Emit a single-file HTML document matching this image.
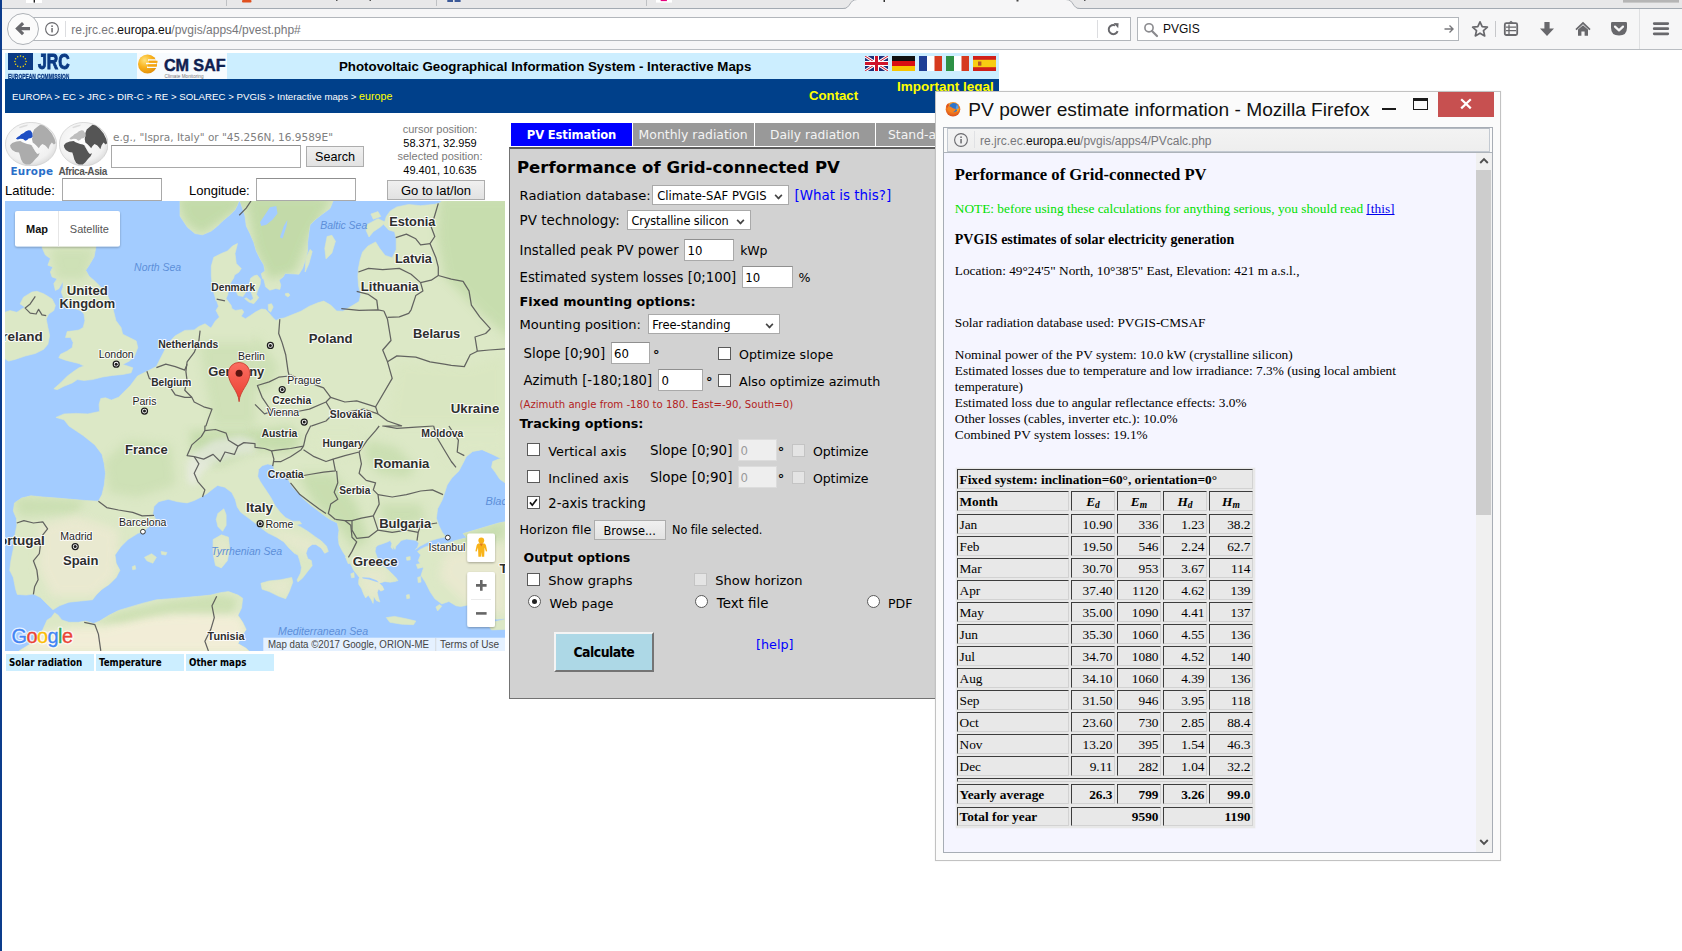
<!DOCTYPE html>
<html lang="en">
<head>
<meta charset="utf-8">
<title>PV potential estimation utility</title>
<style>
html,body{margin:0;padding:0;}
body{width:1682px;height:951px;position:relative;overflow:hidden;background:#fff;font-family:"DejaVu Sans","Liberation Sans",sans-serif;font-size:13px;color:#000;}
.a{position:absolute;white-space:nowrap;}
.ui{font-family:"Liberation Sans",sans-serif;}
.vd{font-family:"DejaVu Sans","Liberation Sans",sans-serif;}
.tm{font-family:"Liberation Serif",serif;}
.inp{position:absolute;box-sizing:border-box;background:#fff;border:1px solid #a9a9a9;border-top-color:#8f8f8f;font-family:"DejaVu Sans",sans-serif;font-size:12px;line-height:20px;padding-left:3px;}
.btn{position:absolute;box-sizing:border-box;background:linear-gradient(#f0f0f0,#e2e2e2);border:1px solid #adadad;text-align:center;font-family:"Liberation Sans",sans-serif;}
.cb{position:absolute;box-sizing:border-box;width:13px;height:13px;background:#fff;border:1px solid #5a5a5a;}
.cb.dis{background:#e4e4e4;border-color:#c4c4c4;}
.rd{position:absolute;box-sizing:border-box;width:13px;height:13px;border-radius:50%;background:#fff;border:1px solid #5a5a5a;}
.sel{position:absolute;box-sizing:border-box;background:#fff;border:1px solid #a9a9a9;font-family:"DejaVu Sans",sans-serif;font-size:12px;line-height:18px;padding-left:4px;height:20px;}
.sel:after{content:"";position:absolute;right:6px;top:6px;width:5px;height:5px;border-right:2px solid #444;border-bottom:2px solid #444;transform:rotate(45deg) scale(.8);transform-origin:center;}
.lbl{position:absolute;white-space:nowrap;font-size:13px;line-height:16px;}
</style>
</head>
<body>

<!-- ================= BROWSER CHROME ================= -->
<div id="chrome" class="a ui" style="left:0;top:0;width:1682px;height:50px;background:#f6f6f7;">
  <!-- tab strip remnants -->
  <div class="a" style="left:0;top:0;width:1682px;height:8px;background:#e8e8e9;"></div>
  <div class="a" style="left:0;top:7.6px;width:1682px;height:1px;background:#a3aab2;"></div>
  <svg class="a" style="left:0;top:0" width="1682" height="9" viewBox="0 0 1682 9">
    <path d="M843 9 C851 9 849 0 857 0 L1066 0 C1074 0 1072 9 1080 9 Z" fill="#f6f6f7"/>
    <path d="M843 8.5 C851 8.5 849 -0.5 857 -0.5 M1066 -0.5 C1074 -0.5 1072 8.5 1080 8.5" fill="none" stroke="#a9aeb4" stroke-width="1"/>
    <rect x="226" y="0" width="1" height="6" fill="#bfc1c4"/><rect x="436" y="0" width="1" height="6" fill="#bfc1c4"/><rect x="646" y="0" width="1" height="6" fill="#bfc1c4"/>
    <rect x="242" y="0" width="9.5" height="2.6" rx="1" fill="#e0501f"/>
    <rect x="447.3" y="0" width="13.3" height="2" fill="#3b5998"/><rect x="453" y="0" width="1.6" height="2" fill="#e8e8e9"/>
    <rect x="656" y="0" width="16" height="2.6" fill="#fff"/><rect x="660.7" y="0" width="6.2" height="1.1" fill="#e6007e"/>
    <rect x="26" y="0" width="16" height="3" fill="#fff"/><rect x="33.6" y="0" width="1.4" height="2.6" fill="#222"/>
    <rect x="336" y="0" width="1.5" height="1" fill="#555"/><rect x="369.5" y="0" width="1.5" height="1" fill="#555"/><rect x="883.5" y="0" width="1.5" height="2" fill="#333"/><rect x="1016.5" y="0" width="2" height="1.5" fill="#444"/><rect x="1084" y="0" width="1.5" height="1" fill="#555"/>
    <rect x="1623" y="0" width="56" height="2.6" fill="#b5b5b5"/>
  </svg>
  <!-- url bar -->
  <div class="a" style="left:26px;top:17px;width:1105px;height:24px;box-sizing:border-box;background:#fff;border:1px solid #b2b6bb;"></div>
  <div class="a" style="left:65px;top:21px;width:1px;height:16px;background:#dcdde0;"></div>
  <div class="a" style="left:1097px;top:20px;width:1px;height:18px;background:#dcdde0;"></div>
  <!-- back button -->
  <div class="a" style="left:6.6px;top:12.8px;width:32px;height:32px;box-sizing:border-box;border-radius:50%;background:#fbfbfb;border:1px solid #aeb2b7;"></div>
  <svg class="a" style="left:7px;top:13px" width="31" height="31" viewBox="0 0 31 31"><path d="M8.2 15.6 L15 9 L17.2 11.2 L14.3 14 L23 14 L23 17.2 L14.3 17.2 L17.2 20 L15 22.2 Z" fill="#68686c"/></svg>
  <!-- info icon -->
  <svg class="a" style="left:44px;top:21px" width="16" height="16" viewBox="0 0 16 16"><circle cx="8" cy="8" r="6.4" fill="none" stroke="#68686c" stroke-width="1.1"/><rect x="7.3" y="7" width="1.5" height="4.4" fill="#68686c"/><rect x="7.3" y="4.4" width="1.5" height="1.6" fill="#68686c"/></svg>
  <div class="a" style="left:71.3px;top:21.6px;font-size:12px;line-height:16px;color:#77777b;">re.jrc.ec.<span style="color:#0c0c0d">europa.eu</span>/pvgis/apps4/pvest.php#</div>
  <!-- reload -->
  <svg class="a" style="left:1106px;top:22px" width="15" height="15" viewBox="0 0 15 15"><path d="M11.6 9.2 A4.6 4.6 0 1 1 9.3 3.4" fill="none" stroke="#68686c" stroke-width="2"/><path d="M7.6 1 L12.6 1.2 L12.2 6.2 Z" fill="#68686c"/></svg>
  <!-- search box -->
  <div class="a" style="left:1137px;top:17px;width:322px;height:24px;box-sizing:border-box;background:#fff;border:1px solid #b2b6bb;"></div>
  <svg class="a" style="left:1143px;top:22px" width="16" height="16" viewBox="0 0 16 16"><circle cx="6" cy="5.8" r="4.1" fill="none" stroke="#8a8a8e" stroke-width="1.6"/><path d="M9 9 L14 14" stroke="#8a8a8e" stroke-width="2.2" stroke-linecap="round"/></svg>
  <div class="a" style="left:1163px;top:21px;font-size:12px;line-height:16px;color:#0c0c0d;">PVGIS</div>
  <svg class="a" style="left:1443px;top:23px" width="12" height="12" viewBox="0 0 12 12"><path d="M1.5 6 H10 M6.5 2.5 L10 6 L6.5 9.5" fill="none" stroke="#77777b" stroke-width="1.4"/></svg>
  <!-- toolbar icons -->
  <svg class="a" style="left:1471px;top:20px" width="18" height="18" viewBox="0 0 18 18"><path d="M9 1.8 L11.2 6.7 L16.4 7.2 L12.5 10.7 L13.7 15.9 L9 13.2 L4.3 15.9 L5.5 10.7 L1.6 7.2 L6.8 6.7 Z" fill="none" stroke="#68686c" stroke-width="1.7" stroke-linejoin="round"/></svg>
  <div class="a" style="left:1495px;top:21px;width:1px;height:16px;background:#c6c7ca;"></div>
  <svg class="a" style="left:1503px;top:20px" width="16" height="17" viewBox="0 0 16 17"><path d="M5.5 2.8 L8 0.8 L10.5 2.8 Z" fill="#68686c"/><rect x="1.8" y="3.2" width="12.4" height="11.8" rx="1.5" fill="none" stroke="#68686c" stroke-width="1.8"/><path d="M3 7.2 H13 M3 10.6 H13 M6 4.5 V14" stroke="#68686c" stroke-width="1.3"/></svg>
  <svg class="a" style="left:1539px;top:21px" width="16" height="16" viewBox="0 0 16 16"><path d="M5.4 1 H10.6 V7.4 H15 L8 15 L1 7.4 H5.4 Z" fill="#68686c"/></svg>
  <svg class="a" style="left:1575px;top:21px" width="16" height="16" viewBox="0 0 16 16"><path d="M8 0.8 L15.6 8 L14.4 9.2 L8 3.2 L1.6 9.2 L0.4 8 Z" fill="#68686c"/><path d="M3 8.6 L8 4.2 L13 8.6 V14.8 H9.6 V10.4 H6.4 V14.8 H3 Z" fill="#68686c"/></svg>
  <svg class="a" style="left:1610px;top:21px" width="18" height="16" viewBox="0 0 18 16"><path d="M2.2 1 H15.8 Q17 1 17 2.2 V6.5 Q17 14.6 9 14.6 Q1 14.6 1 6.5 V2.2 Q1 1 2.2 1 Z" fill="#68686c"/><path d="M5 5.6 L9 9.4 L13 5.6" fill="none" stroke="#f6f6f7" stroke-width="2.2" stroke-linecap="round" stroke-linejoin="round"/></svg>
  <div class="a" style="left:1639px;top:9px;width:1px;height:40px;background:#dfe0e2;"></div>
  <svg class="a" style="left:1652px;top:21px" width="18" height="16" viewBox="0 0 18 16"><path d="M2.2 2.6 H15.8 M2.2 7.7 H15.8 M2.2 12.8 H15.8" stroke="#68686c" stroke-width="2.7" stroke-linecap="round"/></svg>
  <div class="a" style="left:0;top:49px;width:1682px;height:1px;background:#b9bdc2;"></div>
</div>

<!-- ================= PAGE ================= -->
<div id="page" class="a" style="left:0;top:50px;width:1682px;height:901px;background:#fff;"></div>

<!-- header banner -->
<div class="a" style="left:5px;top:53px;width:994px;height:26px;background:#cceeff;"></div>
<svg class="a" style="left:8px;top:53px" width="25" height="17" viewBox="0 0 25 17"><rect width="25" height="17" fill="#0b3a84"/><circle cx="12.50" cy="2.90" r="0.75" fill="#f5d90a"/><circle cx="15.30" cy="3.65" r="0.75" fill="#f5d90a"/><circle cx="17.35" cy="5.70" r="0.75" fill="#f5d90a"/><circle cx="18.10" cy="8.50" r="0.75" fill="#f5d90a"/><circle cx="17.35" cy="11.30" r="0.75" fill="#f5d90a"/><circle cx="15.30" cy="13.35" r="0.75" fill="#f5d90a"/><circle cx="12.50" cy="14.10" r="0.75" fill="#f5d90a"/><circle cx="9.70" cy="13.35" r="0.75" fill="#f5d90a"/><circle cx="7.65" cy="11.30" r="0.75" fill="#f5d90a"/><circle cx="6.90" cy="8.50" r="0.75" fill="#f5d90a"/><circle cx="7.65" cy="5.70" r="0.75" fill="#f5d90a"/><circle cx="9.70" cy="3.65" r="0.75" fill="#f5d90a"/></svg>
<div class="a ui" style="left:37.6px;top:49px;font-weight:bold;font-size:21.5px;line-height:26px;color:#0b3a84;-webkit-text-stroke:1px #0b3a84;transform:scaleX(0.735);transform-origin:0 0;">JRC</div>
<div class="a ui" style="left:8px;top:71.6px;height:7.4px;overflow:hidden;font-weight:bold;font-size:7.4px;line-height:9px;color:#0b3a84;-webkit-text-stroke:0.3px #0b3a84;transform:scaleX(0.665);transform-origin:0 0;">EUROPEAN COMMISSION</div>
<div class="a" style="left:137px;top:53px;width:90px;height:26px;background:#f7fbfe;"></div>
<svg class="a" style="left:137px;top:53px" width="30" height="26" viewBox="0 0 30 26">
  <defs><radialGradient id="sun" cx="35%" cy="30%" r="75%"><stop offset="0" stop-color="#ffe27a"/><stop offset="0.5" stop-color="#f9b21d"/><stop offset="1" stop-color="#e28f0a"/></radialGradient></defs>
  <circle cx="10.5" cy="11" r="9.5" fill="url(#sun)"/>
  <path d="M11 7 H21 M9 10.6 H19.5 M10 14.2 H21.5" stroke="#f7fbfe" stroke-width="1.5"/>
  <path d="M12 8.8 H20.5 M11 12.4 H20" stroke="#f5a511" stroke-width="2"/>
</svg>
<div class="a ui" style="left:164px;top:55px;font-weight:bold;font-size:16.2px;line-height:20px;color:#0f2050;letter-spacing:-0.1px;-webkit-text-stroke:0.45px #0f2050;">CM SAF</div>
<div class="a ui" style="left:164.5px;top:74px;font-size:4.7px;line-height:6px;color:#777;">Climate Monitoring</div>
<div class="a ui" style="left:339px;top:58.8px;font-weight:bold;font-size:13.3px;line-height:16px;color:#000;">Photovoltaic Geographical Information System - Interactive Maps</div>
<!-- flags -->
<svg class="a" style="left:865px;top:56px" width="131" height="15" viewBox="0 0 131 15">
  <g><rect width="23" height="15" fill="#1d2f7a"/><path d="M0 0 L23 15 M23 0 L0 15" stroke="#fff" stroke-width="3"/><path d="M0 0 L23 15 M23 0 L0 15" stroke="#cf142b" stroke-width="1"/><path d="M11.5 0 V15 M0 7.5 H23" stroke="#fff" stroke-width="5"/><path d="M11.5 0 V15 M0 7.5 H23" stroke="#cf142b" stroke-width="3"/></g>
  <g transform="translate(27 0)"><rect width="23" height="5" fill="#111"/><rect y="5" width="23" height="5" fill="#d90f12"/><rect y="10" width="23" height="5" fill="#f7c600"/></g>
  <g transform="translate(54 0)"><rect width="8" height="15" fill="#1f3f96"/><rect x="8" width="8" height="15" fill="#fff"/><rect x="15.5" width="7.5" height="15" fill="#d63a1f"/></g>
  <g transform="translate(81 0)"><rect width="8" height="15" fill="#2d9145"/><rect x="8" width="8" height="15" fill="#fff"/><rect x="15.5" width="7.5" height="15" fill="#d63a1f"/></g>
  <g transform="translate(108 0)"><rect width="23" height="15" fill="#d0201a"/><rect y="3.8" width="23" height="7.4" fill="#f8cd12"/><rect x="5" y="5.5" width="3.4" height="4.2" fill="#b4562a"/></g>
</svg>
<!-- dark bar -->
<div class="a" style="left:5px;top:79px;width:994px;height:34px;background:#00408a;"></div>
<div class="a ui" style="left:12px;top:89.6px;font-size:9.68px;line-height:13px;color:#fff;">EUROPA &gt; EC &gt; JRC &gt; DIR-C &gt; RE &gt; SOLAREC &gt; PVGIS &gt; Interactive maps &gt; <span style="color:#ffff00;font-size:10.7px;">europe</span></div>
<div class="a ui" style="left:809px;top:88px;font-weight:bold;font-size:13.2px;line-height:16px;color:#ffff00;">Contact</div>
<div class="a ui" style="left:897px;top:79.3px;font-weight:bold;font-size:13.5px;line-height:16px;color:#ffff00;">Important legal</div>

<!-- search section -->
<svg class="a" style="left:5px;top:121.5px" width="52" height="44.5" viewBox="0 0 52 44.5" preserveAspectRatio="none">
  <defs><radialGradient id="gl1" cx="45%" cy="40%" r="65%"><stop offset="0" stop-color="#ffffff"/><stop offset="0.75" stop-color="#f0f0f0"/><stop offset="1" stop-color="#d6d6d6"/></radialGradient><clipPath id="gc1"><ellipse cx="26" cy="22.2" rx="25.6" ry="21.8"/></clipPath></defs>
  <ellipse cx="26" cy="22.2" rx="25.6" ry="21.8" fill="url(#gl1)" stroke="#c4c4c4" stroke-width="0.6"/>
  <g clip-path="url(#gc1)">
    <polygon points="14.0,5.1 18.1,3.4 22.9,2.4 22.2,4.1 17.4,5.5 14.7,6.2" fill="#dcdcdc"/>
    <polygon points="27.7,10.9 29.1,7.5 32.5,4.8 35.2,2.7 38.6,3.4 42.7,6.8 46.8,11.6 49.6,17.1 50.6,21.2 48.9,22.6 46.8,20.5 44.8,23.2 43.4,27.3 42.0,25.3 40.0,23.2 37.3,21.9 35.2,23.9 33.8,26.3 31.8,23.9 29.7,21.9 27.7,20.5 27.0,17.1 27.7,13.7" fill="#acacac"/>
    <polygon points="5.1,23.2 7.2,20.9 11.3,19.5 15.4,19.1 17.4,20.2 22.2,21.9 25.0,22.6 27.0,23.6 28.4,26.0 30.4,29.4 32.5,32.1 34.7,31.3 33.2,34.2 30.4,36.9 27.7,40.3 25.0,42.4 20.9,42.5 18.1,41.0 16.1,37.6 15.0,33.5 14.0,30.4 10.6,30.1 7.2,28.0 5.5,25.6" fill="#acacac"/>
    <polygon points="10.9,16.8 12.6,15.0 14.7,13.7 16.1,12.3 18.8,10.9 20.9,9.2 23.6,8.2 25.6,8.5 27.3,10.9 27.7,14.4 26.3,16.1 23.6,16.4 22.2,18.1 20.2,18.8 18.1,17.1 15.4,16.8 12.6,17.4" fill="#1f4fc4"/>
    <path d="M27.0 23.6 L32.1 31.5" stroke="#f2f2f2" stroke-width="0.7"/>
  </g>
</svg>
<svg class="a" style="left:58.5px;top:121.5px" width="49.5" height="44.5" viewBox="0 0 52 44.5" preserveAspectRatio="none">
  <defs><radialGradient id="gl2" cx="45%" cy="40%" r="65%"><stop offset="0" stop-color="#ffffff"/><stop offset="0.75" stop-color="#f0f0f0"/><stop offset="1" stop-color="#d6d6d6"/></radialGradient><clipPath id="gc2"><ellipse cx="26" cy="22.2" rx="25.6" ry="21.8"/></clipPath></defs>
  <ellipse cx="26" cy="22.2" rx="25.6" ry="21.8" fill="url(#gl2)" stroke="#c4c4c4" stroke-width="0.6"/>
  <g clip-path="url(#gc2)">
    <polygon points="14.0,5.1 18.1,3.4 22.9,2.4 22.2,4.1 17.4,5.5 14.7,6.2" fill="#dcdcdc"/>
    <polygon points="27.7,10.9 29.1,7.5 32.5,4.8 35.2,2.7 38.6,3.4 42.7,6.8 46.8,11.6 49.6,17.1 50.6,21.2 48.9,22.6 46.8,20.5 44.8,23.2 43.4,27.3 42.0,25.3 40.0,23.2 37.3,21.9 35.2,23.9 33.8,26.3 31.8,23.9 29.7,21.9 27.7,20.5 27.0,17.1 27.7,13.7" fill="#555555"/>
    <polygon points="5.1,23.2 7.2,20.9 11.3,19.5 15.4,19.1 17.4,20.2 22.2,21.9 25.0,22.6 27.0,23.6 28.4,26.0 30.4,29.4 32.5,32.1 34.7,31.3 33.2,34.2 30.4,36.9 27.7,40.3 25.0,42.4 20.9,42.5 18.1,41.0 16.1,37.6 15.0,33.5 14.0,30.4 10.6,30.1 7.2,28.0 5.5,25.6" fill="#555555"/>
    <polygon points="10.9,16.8 12.6,15.0 14.7,13.7 16.1,12.3 18.8,10.9 20.9,9.2 23.6,8.2 25.6,8.5 27.3,10.9 27.7,14.4 26.3,16.1 23.6,16.4 22.2,18.1 20.2,18.8 18.1,17.1 15.4,16.8 12.6,17.4" fill="#bdbdbd"/>
    <path d="M27.0 23.6 L32.1 31.5" stroke="#f2f2f2" stroke-width="0.7"/>
  </g>
</svg>
<div class="a vd" style="left:10.5px;top:165px;font-weight:bold;font-size:10.4px;line-height:13px;color:#2a6fc9;letter-spacing:0.25px;">Europe</div>
<div class="a ui" style="left:58.5px;top:165px;font-weight:bold;font-size:10px;line-height:13px;color:#555;letter-spacing:-0.4px;">Africa-Asia</div>
<div class="a vd" style="left:113px;top:131px;font-size:10.5px;line-height:13px;color:#808080;">e.g., "Ispra, Italy" or "45.256N, 16.9589E"</div>
<div class="inp" style="left:111px;top:145px;width:190px;height:23px;"></div>
<div class="btn" style="left:306px;top:146px;width:58px;height:21px;font-size:12.6px;line-height:20px;">Search</div>
<div class="a ui" style="left:391px;top:123px;width:98px;text-align:center;font-size:11px;line-height:13.7px;color:#7a7a7a;">cursor position:<br><span style="color:#000">58.371, 32.959</span><br>selected position:<br><span style="color:#000">49.401, 10.635</span></div>
<div class="a ui" style="left:5px;top:182.8px;font-size:13px;line-height:16px;">Latitude:</div>
<div class="inp" style="left:62px;top:178px;width:100px;height:23px;"></div>
<div class="a ui" style="left:189px;top:182.8px;font-size:13px;line-height:16px;">Longitude:</div>
<div class="inp" style="left:256px;top:178px;width:100px;height:23px;"></div>
<div class="btn" style="left:387px;top:179.5px;width:98px;height:20.5px;font-size:13px;line-height:19px;">Go to lat/lon</div>

<!--MAP-->
<svg class="a" style="left:5px;top:201px" width="500" height="450" viewBox="0 0 500 450">
<rect width="500" height="450" fill="#a3ccff"/>
<g fill="#dce8c6" stroke="#dce8c6" stroke-width="0.6" stroke-linejoin="round">
<polygon points="232.5,42.5 230.0,52.5 231.3,62.6 236.3,67.6 233.8,71.3 229.5,74.0 228.7,77.0 226.1,81.0 223.5,88.0 222.8,93.4 221.1,97.6 223.6,101.0 226.1,104.3 227.0,107.7 230.3,109.4 237.1,108.5 238.8,111.1 236.2,115.3 240.4,117.8 245.5,114.4 250.5,111.1 256.4,108.1 260.6,108.5 264.0,111.9 266.5,114.9 269.0,117.8 271.1,119.5 274.5,117.8 279.1,117.0 287.6,113.6 296.0,110.2 304.4,105.2 312.8,101.8 318.7,100.1 325.7,104.1 331.6,110.0 338.0,110.2 343.4,106.9 354.1,100.5 355.7,93.4 353.6,85.1 352.9,75.7 353.4,67.4 355.3,57.9 357.6,50.9 363.1,44.9 370.6,40.9 374.6,47.3 380.1,54.4 387.2,56.8 391.2,48.5 391.2,37.8 389.5,30.7 383.6,28.9 378.9,23.7 381.3,15.4 385.3,9.9 391.9,5.9 403.7,3.5 415.6,4.7 429.8,3.3 434.5,1.9 436.8,0.0 500.0,0.0 500.0,258.1 496.0,257.6 486.5,252.9 477.1,248.7 467.6,250.5 461.2,255.7 457.7,262.8 453.9,269.9 446.8,277.0 442.1,284.1 439.7,291.7 437.3,298.8 432.6,307.8 431.4,317.2 433.8,324.3 437.3,331.4 440.4,335.2 444.0,335.4 439.9,336.1 433.0,337.5 426.2,339.5 420.7,342.2 415.3,345.0 410.5,348.4 412.5,346.3 413.9,342.2 411.1,339.5 407.0,338.8 401.6,338.1 396.1,339.5 392.7,343.6 390.9,345.0 390.0,348.4 387.6,345.0 388.2,348.4 385.9,346.3 386.8,342.5 385.2,339.5 382.4,340.9 377.0,342.9 372.9,344.3 370.8,346.3 370.1,350.5 371.5,354.6 373.5,360.0 376.3,364.1 379.0,367.1 381.1,369.6 385.2,372.6 389.3,376.4 391.3,380.3 385.2,381.2 379.7,380.5 374.2,382.2 377.2,384.9 379.0,388.7 375.9,390.1 373.5,388.1 372.2,391.5 373.5,396.9 374.9,401.0 371.5,399.7 368.8,395.6 368.1,402.4 366.0,398.3 363.3,394.2 360.6,396.9 358.5,392.8 356.5,387.4 353.7,383.3 353.7,379.2 354.4,376.4 352.3,373.7 348.9,369.6 346.9,365.5 344.1,360.0 340.0,355.9 341.2,355.9 337.6,350.5 334.0,343.4 333.2,336.2 334.0,329.1 332.3,321.9 325.1,318.4 319.7,314.8 312.6,309.4 305.5,304.1 298.3,297.8 292.9,291.6 287.6,286.2 284.0,279.9 280.4,273.7 276.9,270.1 274.2,271.0 271.5,275.5 269.7,271.9 268.8,266.5 267.9,263.9 262.6,263.0 257.2,264.7 253.6,268.3 252.7,275.5 255.4,280.8 259.0,286.2 262.6,291.6 266.1,296.9 269.7,304.1 275.1,311.2 280.4,316.6 287.6,320.2 294.7,320.2 296.5,322.8 291.2,323.7 296.5,326.4 303.7,330.9 310.8,336.2 316.2,339.8 321.5,345.2 323.3,350.5 319.7,352.3 316.2,347.0 310.8,343.4 307.2,343.4 302.8,347.0 301.0,352.3 302.8,357.7 306.3,359.5 307.2,364.8 302.8,370.2 297.4,377.3 292.9,380.9 292.0,379.1 295.6,372.0 296.5,366.6 294.7,359.5 292.9,354.1 289.4,352.3 284.0,347.0 278.6,340.7 271.5,336.2 262.6,331.8 255.4,326.4 250.0,321.9 242.9,316.6 235.7,311.2 232.2,305.9 230.4,298.7 226.8,291.6 219.7,286.2 212.5,284.4 208.1,287.7 202.2,292.4 196.3,296.0 189.2,299.5 182.1,301.9 172.7,300.7 163.2,298.3 153.7,300.7 149.0,305.4 147.8,312.5 150.7,318.4 145.5,324.3 138.4,330.3 132.5,332.6 123.0,338.5 115.9,345.6 110.0,353.9 111.2,362.2 114.9,369.3 111.2,376.4 104.1,383.5 97.0,388.2 91.1,394.1 87.5,398.8 75.7,400.0 63.9,401.2 54.4,404.8 48.0,408.8 41.4,402.4 35.5,396.5 28.4,392.9 21.3,394.1 12.3,393.4 10.6,388.2 8.3,376.4 4.7,369.3 5.9,359.8 8.3,348.0 9.5,336.2 11.8,324.3 11.4,317.2 8.3,310.1 9.5,301.9 16.6,297.1 26.0,294.8 37.8,296.0 52.0,297.1 66.2,298.3 80.4,299.5 93.4,300.2 97.0,293.6 99.3,284.1 100.5,272.3 99.3,262.8 97.0,253.4 89.9,243.9 78.1,234.5 63.9,225.0 63.9,224.9 59.1,218.8 50.9,216.4 59.1,212.9 71.0,212.4 82.8,212.9 94.6,210.5 94.1,203.4 95.8,197.5 100.5,196.8 106.4,199.1 113.5,196.3 118.3,191.6 125.4,184.5 132.5,175.0 141.9,170.3 151.4,165.6 153.7,160.8 158.5,151.4 163.2,141.9 170.3,134.8 179.8,129.4 189.2,128.9 193.9,125.4 200.0,122.8 205.9,127.1 207.6,124.5 210.1,120.3 214.4,116.1 211.0,109.4 213.5,105.2 211.0,98.0 211.3,100.0 207.5,87.6 206.3,75.0 206.3,65.0 208.8,56.3 216.3,52.5 222.5,50.0 227.5,45.0"/>
<polygon points="42.0,28.9 80.7,25.5 90.8,39.0 90.8,46.6 89.1,55.8 84.1,64.2 80.7,69.3 84.1,75.2 89.1,79.4 94.2,84.4 102.6,94.5 107.6,106.3 109.3,113.0 111.0,119.7 116.0,126.4 117.7,133.2 124.4,136.5 131.2,139.9 132.8,146.6 129.5,155.0 124.4,160.1 117.7,163.4 127.8,166.8 126.1,171.8 117.7,173.5 107.6,174.4 97.5,176.0 87.4,178.6 79.0,179.4 72.3,178.6 67.3,181.9 58.9,185.3 52.1,188.7 48.8,187.8 55.5,181.9 62.2,175.2 68.9,170.2 74.0,166.8 79.0,165.1 74.0,162.6 67.3,160.9 60.5,159.2 53.8,156.7 55.5,153.3 62.2,150.0 67.3,146.6 68.1,141.6 65.6,136.5 60.5,136.5 62.2,130.6 68.9,129.8 74.0,129.0 78.2,126.4 79.9,119.7 79.0,113.0 75.7,109.6 70.6,107.9 65.6,106.3 62.2,102.9 58.9,97.9 56.3,91.1 58.0,86.1 58.0,80.2 53.8,87.8 50.4,89.4 48.8,82.7 52.1,77.7 47.1,76.0 45.4,70.9 47.9,65.9 42.9,64.2 45.4,57.5 40.4,54.1 37.0,46.6"/>
<polygon points="15.1,102.9 18.5,96.2 26.9,91.1 31.9,90.3 38.7,92.8 47.1,97.9 50.4,104.6 48.8,109.6 43.7,113.0 41.2,118.0 42.9,126.4 44.6,134.8 42.9,143.3 38.7,148.3 30.3,152.5 20.2,155.0 10.1,158.4 3.4,160.1 -1.7,156.7 -1.7,113.0 0.0,111.3 5.0,109.6 11.8,111.3 16.8,107.9 20.2,106.3"/>
<polygon points="175.0,0.0 175.0,15.0 177.5,18.8 182.5,26.3 190.0,32.5 197.5,33.8 206.3,30.0 212.5,25.0 217.5,20.0 225.0,13.8 230.0,8.8 232.5,3.8 233.8,0.0 235.0,0.0 237.6,7.5 240.0,15.0 241.3,25.0 245.0,32.5 248.8,41.3 251.3,50.0 255.0,57.5 258.8,63.8 260.0,70.0 256.3,72.6 257.5,77.6 258.9,78.3 260.6,85.8 264.8,89.2 270.7,87.5 274.9,88.4 275.8,84.1 274.1,79.1 278.3,75.7 280.0,72.4 283.8,72.6 293.9,73.2 297.5,67.5 300.0,60.0 302.6,50.0 302.6,41.3 303.8,31.3 305.0,23.8 310.0,18.8 316.4,13.8 325.0,7.5 328.0,0.0"/>
<polygon points="252.2,74.0 255.6,78.3 255.2,83.3 253.1,88.4 251.4,93.4 253.9,96.8 248.8,98.4 247.2,94.2 245.5,89.2 244.6,82.5 245.5,77.4 248.8,74.9"/>
<polygon points="232.0,85.0 239.0,84.5 241.5,90.0 238.0,95.5 233.0,94.5 231.0,90.0"/>
<polygon points="239.6,97.6 243.8,101.0 248.8,102.7 253.1,97.6 250.1,96.3 245.5,99.7 241.3,96.8"/>
<polygon points="263.2,103.5 266.5,102.7 268.2,106.0 265.7,111.1 263.6,109.4"/>
<polygon points="322.1,35.5 326.9,34.3 330.4,40.2 326.9,52.0 321.0,57.9 319.8,47.3"/>
<polygon points="300.9,56.8 305.1,48.5 307.2,50.4 303.9,62.7 300.1,71.0"/>
<polygon points="361.9,23.7 373.0,17.7 380.6,21.3 375.4,26.0 368.3,30.7 364.0,36.0 361.2,29.6"/>
<polygon points="365.9,13.0 373.0,10.6 375.8,15.4 368.3,18.2"/>
<polygon points="280.4,92.6 283.3,92.1 285.0,94.2 282.9,95.9 280.4,94.2"/>
<polygon points="139.5,356.3 146.6,352.7 151.4,356.3 147.8,362.2 141.9,359.8"/>
<polygon points="156.1,350.4 162.0,351.5 160.8,354.1 156.6,353.4"/>
<polygon points="127.2,365.7 130.1,364.5 130.8,368.1 127.7,368.8"/>
<polygon points="212.9,312.5 218.8,307.8 221.1,313.7 221.1,324.3 217.6,330.3 212.9,325.5 211.2,318.4"/>
<polygon points="208.1,338.5 216.4,333.8 223.5,336.2 224.7,348.0 222.3,359.8 216.4,366.9 210.5,364.5 208.1,352.7"/>
<polygon points="255.9,382.3 264.2,379.9 276.0,378.7 286.7,376.4 287.8,381.1 284.3,390.6 280.7,397.7 273.7,395.3 264.2,390.6 257.1,388.2"/>
<polygon points="381.3,416.6 389.5,415.4 401.4,417.8 410.8,420.1 408.5,423.7 396.6,423.2 384.8,421.3"/>
<polygon points="377.6,365.5 380.4,366.2 385.9,371.6 391.3,377.1 393.0,379.9 390.4,379.2 384.5,374.4 379.4,369.6"/>
<polygon points="411.3,363.4 416.7,362.2 417.5,366.4 412.7,367.4"/>
<polygon points="412.7,376.4 415.6,375.4 416.0,381.1 413.2,381.6"/>
<polygon points="430.9,405.9 434.5,403.6 436.8,405.2 432.6,410.0"/>
<polygon points="401.4,356.3 405.2,355.6 405.2,358.9 401.8,359.3"/>
<polygon points="401.4,394.1 404.2,393.4 404.7,397.2 401.8,397.7"/>
<polygon points="483.0,423.7 488.9,420.8 500.0,418.5 500.0,428.4 486.5,428.9"/>
<polygon points="341.1,357.5 343.0,356.7 345.1,362.2 343.2,362.7"/>
<polygon points="345.8,372.8 348.9,371.6 349.3,376.4 346.5,376.8"/>
<polygon points="458.1,332.6 470.0,329.1 481.8,325.5 493.6,322.0 500.0,320.8 500.0,417.8 491.2,418.2 484.2,417.1 474.7,411.8 462.9,404.0 455.8,405.5 451.0,404.8 443.9,400.5 436.8,402.9 429.8,397.7 425.0,390.6 420.3,381.1 416.0,374.5 418.4,366.9 413.2,359.8 415.6,353.9 412.5,350.5 415.3,348.4 420.7,345.7 426.2,344.3 434.4,343.6 442.6,342.2 450.8,339.5 461.7,336.8"/>
<polygon points="487.7,260.5 493.6,258.1 500.0,256.9 500.0,281.8 494.8,278.2 490.1,271.1 486.5,266.4"/>
<polygon points="8.0,456.0 14.3,449.7 23.5,444.0 34.2,436.8 42.1,419.0 46.1,416.6 49.7,411.8 53.2,414.2 56.8,418.9 63.9,421.3 73.3,421.3 80.4,420.1 88.7,422.5 94.6,420.1 104.1,414.2 113.5,409.5 125.4,405.9 137.2,402.4 151.4,398.8 165.6,397.7 179.8,396.5 193.9,395.3 205.8,394.1 215.2,391.7 223.5,390.6 233.0,394.1 237.7,397.2 236.5,407.1 233.0,414.2 237.7,421.3 241.2,428.4 236.5,435.5 233.0,442.6 241.2,447.3 246.0,452.1"/>
</g>
<defs><filter id="sh" x="-10%" y="-10%" width="120%" height="130%"><feGaussianBlur in="SourceAlpha" stdDeviation="1"/><feOffset dy="1"/><feComponentTransfer><feFuncA type="linear" slope="0.3"/></feComponentTransfer><feMerge><feMergeNode/><feMergeNode in="SourceGraphic"/></feMerge></filter></defs>
<defs><clipPath id="landclip"><polygon points="232.5,42.5 230.0,52.5 231.3,62.6 236.3,67.6 233.8,71.3 229.5,74.0 228.7,77.0 226.1,81.0 223.5,88.0 222.8,93.4 221.1,97.6 223.6,101.0 226.1,104.3 227.0,107.7 230.3,109.4 237.1,108.5 238.8,111.1 236.2,115.3 240.4,117.8 245.5,114.4 250.5,111.1 256.4,108.1 260.6,108.5 264.0,111.9 266.5,114.9 269.0,117.8 271.1,119.5 274.5,117.8 279.1,117.0 287.6,113.6 296.0,110.2 304.4,105.2 312.8,101.8 318.7,100.1 325.7,104.1 331.6,110.0 338.0,110.2 343.4,106.9 354.1,100.5 355.7,93.4 353.6,85.1 352.9,75.7 353.4,67.4 355.3,57.9 357.6,50.9 363.1,44.9 370.6,40.9 374.6,47.3 380.1,54.4 387.2,56.8 391.2,48.5 391.2,37.8 389.5,30.7 383.6,28.9 378.9,23.7 381.3,15.4 385.3,9.9 391.9,5.9 403.7,3.5 415.6,4.7 429.8,3.3 434.5,1.9 436.8,0.0 500.0,0.0 500.0,258.1 496.0,257.6 486.5,252.9 477.1,248.7 467.6,250.5 461.2,255.7 457.7,262.8 453.9,269.9 446.8,277.0 442.1,284.1 439.7,291.7 437.3,298.8 432.6,307.8 431.4,317.2 433.8,324.3 437.3,331.4 440.4,335.2 444.0,335.4 439.9,336.1 433.0,337.5 426.2,339.5 420.7,342.2 415.3,345.0 410.5,348.4 412.5,346.3 413.9,342.2 411.1,339.5 407.0,338.8 401.6,338.1 396.1,339.5 392.7,343.6 390.9,345.0 390.0,348.4 387.6,345.0 388.2,348.4 385.9,346.3 386.8,342.5 385.2,339.5 382.4,340.9 377.0,342.9 372.9,344.3 370.8,346.3 370.1,350.5 371.5,354.6 373.5,360.0 376.3,364.1 379.0,367.1 381.1,369.6 385.2,372.6 389.3,376.4 391.3,380.3 385.2,381.2 379.7,380.5 374.2,382.2 377.2,384.9 379.0,388.7 375.9,390.1 373.5,388.1 372.2,391.5 373.5,396.9 374.9,401.0 371.5,399.7 368.8,395.6 368.1,402.4 366.0,398.3 363.3,394.2 360.6,396.9 358.5,392.8 356.5,387.4 353.7,383.3 353.7,379.2 354.4,376.4 352.3,373.7 348.9,369.6 346.9,365.5 344.1,360.0 340.0,355.9 341.2,355.9 337.6,350.5 334.0,343.4 333.2,336.2 334.0,329.1 332.3,321.9 325.1,318.4 319.7,314.8 312.6,309.4 305.5,304.1 298.3,297.8 292.9,291.6 287.6,286.2 284.0,279.9 280.4,273.7 276.9,270.1 274.2,271.0 271.5,275.5 269.7,271.9 268.8,266.5 267.9,263.9 262.6,263.0 257.2,264.7 253.6,268.3 252.7,275.5 255.4,280.8 259.0,286.2 262.6,291.6 266.1,296.9 269.7,304.1 275.1,311.2 280.4,316.6 287.6,320.2 294.7,320.2 296.5,322.8 291.2,323.7 296.5,326.4 303.7,330.9 310.8,336.2 316.2,339.8 321.5,345.2 323.3,350.5 319.7,352.3 316.2,347.0 310.8,343.4 307.2,343.4 302.8,347.0 301.0,352.3 302.8,357.7 306.3,359.5 307.2,364.8 302.8,370.2 297.4,377.3 292.9,380.9 292.0,379.1 295.6,372.0 296.5,366.6 294.7,359.5 292.9,354.1 289.4,352.3 284.0,347.0 278.6,340.7 271.5,336.2 262.6,331.8 255.4,326.4 250.0,321.9 242.9,316.6 235.7,311.2 232.2,305.9 230.4,298.7 226.8,291.6 219.7,286.2 212.5,284.4 208.1,287.7 202.2,292.4 196.3,296.0 189.2,299.5 182.1,301.9 172.7,300.7 163.2,298.3 153.7,300.7 149.0,305.4 147.8,312.5 150.7,318.4 145.5,324.3 138.4,330.3 132.5,332.6 123.0,338.5 115.9,345.6 110.0,353.9 111.2,362.2 114.9,369.3 111.2,376.4 104.1,383.5 97.0,388.2 91.1,394.1 87.5,398.8 75.7,400.0 63.9,401.2 54.4,404.8 48.0,408.8 41.4,402.4 35.5,396.5 28.4,392.9 21.3,394.1 12.3,393.4 10.6,388.2 8.3,376.4 4.7,369.3 5.9,359.8 8.3,348.0 9.5,336.2 11.8,324.3 11.4,317.2 8.3,310.1 9.5,301.9 16.6,297.1 26.0,294.8 37.8,296.0 52.0,297.1 66.2,298.3 80.4,299.5 93.4,300.2 97.0,293.6 99.3,284.1 100.5,272.3 99.3,262.8 97.0,253.4 89.9,243.9 78.1,234.5 63.9,225.0 63.9,224.9 59.1,218.8 50.9,216.4 59.1,212.9 71.0,212.4 82.8,212.9 94.6,210.5 94.1,203.4 95.8,197.5 100.5,196.8 106.4,199.1 113.5,196.3 118.3,191.6 125.4,184.5 132.5,175.0 141.9,170.3 151.4,165.6 153.7,160.8 158.5,151.4 163.2,141.9 170.3,134.8 179.8,129.4 189.2,128.9 193.9,125.4 200.0,122.8 205.9,127.1 207.6,124.5 210.1,120.3 214.4,116.1 211.0,109.4 213.5,105.2 211.0,98.0 211.3,100.0 207.5,87.6 206.3,75.0 206.3,65.0 208.8,56.3 216.3,52.5 222.5,50.0 227.5,45.0"/><polygon points="42.0,28.9 80.7,25.5 90.8,39.0 90.8,46.6 89.1,55.8 84.1,64.2 80.7,69.3 84.1,75.2 89.1,79.4 94.2,84.4 102.6,94.5 107.6,106.3 109.3,113.0 111.0,119.7 116.0,126.4 117.7,133.2 124.4,136.5 131.2,139.9 132.8,146.6 129.5,155.0 124.4,160.1 117.7,163.4 127.8,166.8 126.1,171.8 117.7,173.5 107.6,174.4 97.5,176.0 87.4,178.6 79.0,179.4 72.3,178.6 67.3,181.9 58.9,185.3 52.1,188.7 48.8,187.8 55.5,181.9 62.2,175.2 68.9,170.2 74.0,166.8 79.0,165.1 74.0,162.6 67.3,160.9 60.5,159.2 53.8,156.7 55.5,153.3 62.2,150.0 67.3,146.6 68.1,141.6 65.6,136.5 60.5,136.5 62.2,130.6 68.9,129.8 74.0,129.0 78.2,126.4 79.9,119.7 79.0,113.0 75.7,109.6 70.6,107.9 65.6,106.3 62.2,102.9 58.9,97.9 56.3,91.1 58.0,86.1 58.0,80.2 53.8,87.8 50.4,89.4 48.8,82.7 52.1,77.7 47.1,76.0 45.4,70.9 47.9,65.9 42.9,64.2 45.4,57.5 40.4,54.1 37.0,46.6"/><polygon points="15.1,102.9 18.5,96.2 26.9,91.1 31.9,90.3 38.7,92.8 47.1,97.9 50.4,104.6 48.8,109.6 43.7,113.0 41.2,118.0 42.9,126.4 44.6,134.8 42.9,143.3 38.7,148.3 30.3,152.5 20.2,155.0 10.1,158.4 3.4,160.1 -1.7,156.7 -1.7,113.0 0.0,111.3 5.0,109.6 11.8,111.3 16.8,107.9 20.2,106.3"/><polygon points="175.0,0.0 175.0,15.0 177.5,18.8 182.5,26.3 190.0,32.5 197.5,33.8 206.3,30.0 212.5,25.0 217.5,20.0 225.0,13.8 230.0,8.8 232.5,3.8 233.8,0.0 235.0,0.0 237.6,7.5 240.0,15.0 241.3,25.0 245.0,32.5 248.8,41.3 251.3,50.0 255.0,57.5 258.8,63.8 260.0,70.0 256.3,72.6 257.5,77.6 258.9,78.3 260.6,85.8 264.8,89.2 270.7,87.5 274.9,88.4 275.8,84.1 274.1,79.1 278.3,75.7 280.0,72.4 283.8,72.6 293.9,73.2 297.5,67.5 300.0,60.0 302.6,50.0 302.6,41.3 303.8,31.3 305.0,23.8 310.0,18.8 316.4,13.8 325.0,7.5 328.0,0.0"/><polygon points="252.2,74.0 255.6,78.3 255.2,83.3 253.1,88.4 251.4,93.4 253.9,96.8 248.8,98.4 247.2,94.2 245.5,89.2 244.6,82.5 245.5,77.4 248.8,74.9"/><polygon points="232.0,85.0 239.0,84.5 241.5,90.0 238.0,95.5 233.0,94.5 231.0,90.0"/><polygon points="239.6,97.6 243.8,101.0 248.8,102.7 253.1,97.6 250.1,96.3 245.5,99.7 241.3,96.8"/><polygon points="263.2,103.5 266.5,102.7 268.2,106.0 265.7,111.1 263.6,109.4"/><polygon points="322.1,35.5 326.9,34.3 330.4,40.2 326.9,52.0 321.0,57.9 319.8,47.3"/><polygon points="300.9,56.8 305.1,48.5 307.2,50.4 303.9,62.7 300.1,71.0"/><polygon points="361.9,23.7 373.0,17.7 380.6,21.3 375.4,26.0 368.3,30.7 364.0,36.0 361.2,29.6"/><polygon points="365.9,13.0 373.0,10.6 375.8,15.4 368.3,18.2"/><polygon points="280.4,92.6 283.3,92.1 285.0,94.2 282.9,95.9 280.4,94.2"/><polygon points="139.5,356.3 146.6,352.7 151.4,356.3 147.8,362.2 141.9,359.8"/><polygon points="156.1,350.4 162.0,351.5 160.8,354.1 156.6,353.4"/><polygon points="127.2,365.7 130.1,364.5 130.8,368.1 127.7,368.8"/><polygon points="212.9,312.5 218.8,307.8 221.1,313.7 221.1,324.3 217.6,330.3 212.9,325.5 211.2,318.4"/><polygon points="208.1,338.5 216.4,333.8 223.5,336.2 224.7,348.0 222.3,359.8 216.4,366.9 210.5,364.5 208.1,352.7"/><polygon points="255.9,382.3 264.2,379.9 276.0,378.7 286.7,376.4 287.8,381.1 284.3,390.6 280.7,397.7 273.7,395.3 264.2,390.6 257.1,388.2"/><polygon points="381.3,416.6 389.5,415.4 401.4,417.8 410.8,420.1 408.5,423.7 396.6,423.2 384.8,421.3"/><polygon points="377.6,365.5 380.4,366.2 385.9,371.6 391.3,377.1 393.0,379.9 390.4,379.2 384.5,374.4 379.4,369.6"/><polygon points="411.3,363.4 416.7,362.2 417.5,366.4 412.7,367.4"/><polygon points="412.7,376.4 415.6,375.4 416.0,381.1 413.2,381.6"/><polygon points="430.9,405.9 434.5,403.6 436.8,405.2 432.6,410.0"/><polygon points="401.4,356.3 405.2,355.6 405.2,358.9 401.8,359.3"/><polygon points="401.4,394.1 404.2,393.4 404.7,397.2 401.8,397.7"/><polygon points="483.0,423.7 488.9,420.8 500.0,418.5 500.0,428.4 486.5,428.9"/><polygon points="341.1,357.5 343.0,356.7 345.1,362.2 343.2,362.7"/><polygon points="345.8,372.8 348.9,371.6 349.3,376.4 346.5,376.8"/><polygon points="458.1,332.6 470.0,329.1 481.8,325.5 493.6,322.0 500.0,320.8 500.0,417.8 491.2,418.2 484.2,417.1 474.7,411.8 462.9,404.0 455.8,405.5 451.0,404.8 443.9,400.5 436.8,402.9 429.8,397.7 425.0,390.6 420.3,381.1 416.0,374.5 418.4,366.9 413.2,359.8 415.6,353.9 412.5,350.5 415.3,348.4 420.7,345.7 426.2,344.3 434.4,343.6 442.6,342.2 450.8,339.5 461.7,336.8"/><polygon points="487.7,260.5 493.6,258.1 500.0,256.9 500.0,281.8 494.8,278.2 490.1,271.1 486.5,266.4"/><polygon points="8.0,456.0 14.3,449.7 23.5,444.0 34.2,436.8 42.1,419.0 46.1,416.6 49.7,411.8 53.2,414.2 56.8,418.9 63.9,421.3 73.3,421.3 80.4,420.1 88.7,422.5 94.6,420.1 104.1,414.2 113.5,409.5 125.4,405.9 137.2,402.4 151.4,398.8 165.6,397.7 179.8,396.5 193.9,395.3 205.8,394.1 215.2,391.7 223.5,390.6 233.0,394.1 237.7,397.2 236.5,407.1 233.0,414.2 237.7,421.3 241.2,428.4 236.5,435.5 233.0,442.6 241.2,447.3 246.0,452.1"/></clipPath><filter id="bl3" x="-20%" y="-20%" width="140%" height="140%"><feGaussianBlur stdDeviation="3"/></filter><filter id="bl6" x="-20%" y="-20%" width="140%" height="140%"><feGaussianBlur stdDeviation="5"/></filter></defs>
<g clip-path="url(#landclip)">
<polygon points="171.5,-4.7 179.8,21.3 196.3,33.1 217.6,18.9 250.0,-4.7" fill="#c0d9a6" opacity="0.9" filter="url(#bl6)"/>
<polygon points="240.5,-4.7 250.0,47.3 264.2,78.1 290.2,71.0 304.4,35.5 328.1,-4.7" fill="#c0d9a6" opacity="0.9" filter="url(#bl6)"/>
<polygon points="434.5,-4.7 432.1,35.5 439.2,75.7 477.1,113.5 510.2,141.9 510.2,-4.7" fill="#c0d9a6" opacity="0.72" filter="url(#bl6)"/>
<polygon points="184.5,229.7 189.2,258.1 212.9,265.2 250.0,248.7 250.0,229.7" fill="#c0d9a6" opacity="0.8" filter="url(#bl6)"/>
<polygon points="245.3,229.7 250.0,248.7 285.5,251.0 297.3,239.2 285.5,225.0" fill="#c0d9a6" opacity="0.8" filter="url(#bl6)"/>
<polygon points="292.6,272.3 309.1,303.1 332.8,324.3 349.3,348.0 363.5,338.5 351.7,303.1 328.1,272.3" fill="#c0d9a6" opacity="0.7" filter="url(#bl6)"/>
<polygon points="363.5,239.2 391.9,246.3 410.8,267.6 401.4,277.0 373.0,272.3 358.8,253.4" fill="#c0d9a6" opacity="0.6" filter="url(#bl6)"/>
<polygon points="373.0,303.1 415.6,303.1 420.3,319.6 382.5,329.1" fill="#c0d9a6" opacity="0.6" filter="url(#bl6)"/>
<polygon points="446.3,336.2 500.0,319.6 500.0,336.2 462.9,345.6" fill="#c0d9a6" opacity="0.7" filter="url(#bl6)"/>
<polygon points="250.0,132.5 273.7,165.6 264.2,189.2 250.0,189.2" fill="#c0d9a6" opacity="0.5" filter="url(#bl6)"/>
<polygon points="193.9,141.9 250.0,141.9 250.0,224.9 208.1,224.9" fill="#c0d9a6" opacity="0.45" filter="url(#bl6)"/>
<polygon points="9.5,296.0 80.4,298.3 71.0,312.5 14.2,314.9" fill="#c0d9a6" opacity="0.6" filter="url(#bl6)"/>
<polygon points="99.3,260.5 123.0,239.2 165.6,243.9 170.3,284.1 132.5,296.0 104.1,291.2" fill="#c0d9a6" opacity="0.5" filter="url(#bl6)"/>
<polygon points="44.9,47.3 89.9,47.3 80.4,78.1 52.0,78.1" fill="#c0d9a6" opacity="0.5" filter="url(#bl6)"/>
<polygon points="35.5,324.3 71.0,314.9 113.5,329.1 111.2,376.4 89.9,395.3 47.3,395.3 33.1,366.9" fill="#ece9d2" opacity="0.85" filter="url(#bl6)"/>
<polygon points="9.5,452.1 33.1,433.1 71.0,426.0 99.3,426.0 141.9,414.2 189.2,411.8 236.5,414.2 246.0,452.1" fill="#f3eed8" opacity="0.95" filter="url(#bl6)"/>
<polygon points="89.9,421.3 113.5,411.8 165.6,400.0 212.9,394.1 231.8,397.7 227.1,411.8 165.6,411.8 118.3,421.3" fill="#c4dba8" opacity="0.6" filter="url(#bl3)"/>
<polygon points="439.2,352.7 500.0,343.3 500.0,414.2 462.9,404.8 434.5,376.4" fill="#ece9d2" opacity="0.8" filter="url(#bl6)"/>
<polygon points="434.5,225.0 500.0,225.0 500.0,253.4 462.9,251.0 453.4,265.2 439.2,253.4" fill="#dde8c6" opacity="0.8" filter="url(#bl6)"/>
<polygon points="391.9,160.8 462.9,165.6 500.0,153.7 500.0,224.9 382.5,224.9" fill="#d9e6c0" opacity="0.7" filter="url(#bl6)"/>
<polygon points="304.4,229.7 354.1,229.7 351.7,251.0 328.1,258.1 302.0,248.7" fill="#dce8c4" opacity="0.7" filter="url(#bl6)"/>
<polygon points="273.7,329.1 302.0,336.2 321.0,348.0 309.1,357.5 290.2,348.0 264.2,333.8" fill="#ece9d2" opacity="0.6" filter="url(#bl6)"/>
<polygon points="257.1,382.3 285.5,376.4 285.5,395.3 264.2,390.6" fill="#ece9d2" opacity="0.6" filter="url(#bl6)"/>
<polygon points="209.3,338.5 223.5,336.2 223.5,364.5 210.5,364.5" fill="#ece9d2" opacity="0.5" filter="url(#bl6)"/>
<polygon points="354.1,366.9 382.5,366.9 382.5,400.0 356.4,395.3" fill="#ece9d2" opacity="0.55" filter="url(#bl6)"/>
<polygon points="182.1,260.5 189.2,251.0 208.1,239.2 236.5,234.5 250.0,239.2 250.0,251.0 227.1,255.7 208.1,262.8 196.3,272.3 189.2,286.5 182.1,279.4" fill="#ececea" opacity="0.6" filter="url(#bl3)"/>
</g>
<g fill="#a3ccff"><polygon points="255.0,21.3 260.0,13.8 265.0,6.3 271.3,5.0 272.5,12.5 267.5,18.8 261.3,23.8 256.3,25.0"/><polygon points="275.0,36.3 278.8,25.0 282.5,18.8 281.3,26.3 277.5,37.5"/><polygon points="357.1,376.2 364.7,376.7 371.5,379.2 373.8,381.4 370.1,380.5 364.0,378.5 357.8,377.5"/></g>
<g fill="none" stroke="#555555" stroke-width="1.25" stroke-linejoin="round" opacity="0.9">
<polyline points="30.3,95.3 25.2,102.9 20.2,107.1 25.2,112.1 31.1,113.0 33.6,108.3 37.0,113.8 41.2,114.7"/>
<polyline points="211.7,98.2 220.0,99.8"/>
<polyline points="195.1,129.6 193.9,139.5 189.2,151.4 182.1,160.8 180.9,170.3 182.1,179.8 179.8,189.2 186.8,196.3 189.2,201.0 198.7,205.8 207.0,208.1 203.4,217.6 201.0,224.9 199.9,225.0 199.9,229.7"/>
<polyline points="151.4,166.7 160.8,163.2 170.3,165.6 179.8,169.1 182.1,163.2"/>
<polyline points="141.9,170.3 144.3,177.4 153.7,182.1 165.6,186.8 170.3,193.9 179.8,196.3 186.8,196.3"/>
<polyline points="274.8,118.3 273.7,132.5 277.2,141.9 280.7,153.7 283.1,170.3 284.3,175.0"/>
<polyline points="284.3,175.0 273.7,176.2 264.2,180.9 252.4,184.5 257.1,196.3 266.6,210.5 278.4,212.9 292.6,210.5 304.4,208.1 321.0,201.0 325.7,196.3 318.6,186.8 309.1,183.3 297.3,179.8 285.5,173.8"/>
<polyline points="325.7,196.3 339.9,201.0 351.7,199.9 370.6,205.8 387.2,177.4 382.5,160.8 377.7,149.0 386.0,139.5 382.5,118.3 378.9,110.0"/>
<polyline points="336.3,107.6 354.1,109.3 373.0,108.8 378.9,110.0"/>
<polyline points="351.7,90.4 363.5,93.4 371.8,99.3 373.0,108.8"/>
<polyline points="353.4,71.0 363.5,67.4 377.7,68.6 394.3,67.4 406.1,73.3 415.6,81.6 417.9,89.9 410.8,94.6 406.1,108.8 403.7,112.3 394.3,115.9 382.5,116.4"/>
<polyline points="390.7,36.7 401.4,33.1 410.8,37.8 415.6,43.8 425.0,42.6"/>
<polyline points="433.3,2.4 429.8,14.2 426.2,26.0 429.8,35.5 425.0,42.6 430.9,56.8 433.3,66.2 433.3,74.5 426.2,79.2 415.6,81.6"/>
<polyline points="433.3,74.5 446.3,78.1 458.1,80.4 464.0,89.9 466.4,104.1 474.7,115.9 485.3,127.7 480.6,132.5 470.0,136.0 472.3,150.2 484.2,149.0 500.0,147.8"/>
<polyline points="382.5,160.8 391.9,154.9 410.8,156.1 425.0,160.8 439.2,163.2 446.3,164.4 459.3,165.6 465.2,153.7 472.3,150.2"/>
<polyline points="370.6,205.8 373.0,212.9 382.5,220.0 396.6,224.9 377.7,225.0 391.9,227.4 410.8,226.2 428.6,225.0"/>
<polyline points="321.0,201.0 328.1,212.9 321.0,220.0 306.8,224.9 305.6,225.0 300.9,234.5 298.5,245.1"/>
<polyline points="328.1,212.9 344.6,210.5 358.8,208.1 373.0,212.9"/>
<polyline points="250.0,203.4 259.5,212.9 266.6,210.5"/>
<polyline points="233.0,245.1 238.9,241.6 250.0,242.7 250.0,246.3 259.5,247.5 266.6,249.8 276.0,248.7 285.5,247.5 298.5,245.1"/>
<polyline points="266.6,249.8 268.9,258.1 267.7,265.2"/>
<polyline points="268.9,260.5 276.0,260.5 285.5,255.7 296.1,248.7 298.5,245.1"/>
<polyline points="298.5,248.7 309.1,255.7 321.0,260.5 328.1,258.1 339.9,254.6 354.1,251.0 362.3,239.2 370.6,229.7 374.2,225.0"/>
<polyline points="280.7,278.2 291.4,275.9 304.4,273.5 318.6,271.1 330.4,269.9 328.1,258.1"/>
<polyline points="285.5,281.8 294.9,293.6 304.4,300.7 313.9,307.8 321.0,312.5"/>
<polyline points="331.6,269.9 332.8,281.8 329.2,291.2 332.8,298.3 325.7,303.1 323.3,312.5 330.4,318.4"/>
<polyline points="354.1,251.0 356.4,262.8 354.1,272.3 361.2,279.4 370.6,281.8 368.3,288.9 373.0,293.6 374.2,303.1 368.3,314.9"/>
<polyline points="373.0,293.6 387.2,296.0 401.4,293.6 415.6,290.0 427.4,288.9 438.0,293.6"/>
<polyline points="428.6,225.0 432.1,236.8 439.2,248.7 446.3,260.5 451.0,266.4"/>
<polyline points="443.9,225.0 453.4,239.2 452.2,251.0 459.3,254.6"/>
<polyline points="368.3,314.9 373.0,329.1 387.2,331.4 401.4,329.1 413.2,331.4 415.6,324.3 432.1,322.0"/>
<polyline points="413.2,331.4 412.0,339.7"/>
<polyline points="330.4,318.4 339.9,319.6 347.0,319.6 356.4,317.2 368.3,314.9"/>
<polyline points="373.0,329.1 363.5,336.2 351.7,337.3 347.0,329.1 347.0,319.6"/>
<polyline points="339.9,319.6 345.8,324.3 347.0,336.2 351.7,340.9 347.0,350.4 343.4,356.3"/>
<polyline points="93.4,300.2 101.7,306.6 113.5,309.0 127.7,311.3 137.2,314.9 149.0,314.4"/>
<polyline points="11.8,322.0 18.9,319.6 28.4,322.0 37.8,320.8 42.6,327.9 37.8,333.8 35.5,343.3 34.3,352.7 28.4,359.8 31.9,369.3 33.1,378.7 29.6,385.8 28.4,393.4"/>
<polyline points="197.5,296.0 199.9,288.9 192.8,280.6 189.2,272.3 193.9,262.8 189.2,255.7 182.1,254.6 186.8,243.9 196.3,235.6 199.9,229.7 210.5,228.5 221.1,232.1 223.5,239.2 233.0,245.1"/>
<polyline points="189.2,255.7 198.7,258.1 208.1,253.4 215.2,260.5 220.0,251.0 229.4,253.4 233.0,245.1"/>
<polyline points="79.2,421.3 89.9,423.7 93.4,433.1 95.8,449.9"/>
<polyline points="211.7,395.3 207.0,404.8 209.3,416.6 205.8,428.4 199.9,440.2 203.4,449.9"/>
<polyline points="234.2,14.2 241.2,7.1 246.0,0.0"/>
</g>
<g font-family="'Liberation Sans',sans-serif">
<text x="152.6" y="70.0" font-size="11" font-weight="normal" font-style="italic" fill="#5d8fd9" text-anchor="middle" stroke="#ffffff" stroke-opacity="0" stroke-width="0" paint-order="stroke" stroke-linejoin="round" textLength="47" lengthAdjust="spacingAndGlyphs">North Sea</text>
<text x="338.7" y="27.9" font-size="11" font-weight="normal" font-style="italic" fill="#5d8fd9" text-anchor="middle" stroke="#ffffff" stroke-opacity="0" stroke-width="0" paint-order="stroke" stroke-linejoin="round" textLength="47" lengthAdjust="spacingAndGlyphs">Baltic Sea</text>
<text x="241.7" y="354.3" font-size="11" font-weight="normal" font-style="italic" fill="#5d8fd9" text-anchor="middle" stroke="#ffffff" stroke-opacity="0" stroke-width="0" paint-order="stroke" stroke-linejoin="round" textLength="71" lengthAdjust="spacingAndGlyphs">Tyrrhenian Sea</text>
<text x="318.1" y="433.5" font-size="11.5" font-weight="normal" font-style="italic" fill="#5d8fd9" text-anchor="middle" stroke="#ffffff" stroke-opacity="0" stroke-width="0" paint-order="stroke" stroke-linejoin="round" textLength="90" lengthAdjust="spacingAndGlyphs">Mediterranean Sea</text>
<text x="480.6" y="304.0" font-size="11" font-weight="normal" font-style="italic" fill="#5d8fd9" text-anchor="start" stroke="#ffffff" stroke-opacity="0" stroke-width="0" paint-order="stroke" stroke-linejoin="round">Black Sea</text>
<text x="82.3" y="94.3" font-size="13.5" font-weight="bold" fill="#2e2e2e" text-anchor="middle" stroke="#ffffff" stroke-opacity="0.85" stroke-width="2.2" paint-order="stroke" stroke-linejoin="round" textLength="41" lengthAdjust="spacingAndGlyphs">United</text>
<text x="82.3" y="107.1" font-size="13.5" font-weight="bold" fill="#2e2e2e" text-anchor="middle" stroke="#ffffff" stroke-opacity="0.85" stroke-width="2.2" paint-order="stroke" stroke-linejoin="round" textLength="55.6" lengthAdjust="spacingAndGlyphs">Kingdom</text>
<text x="228.2" y="89.9" font-size="10.5" font-weight="bold" fill="#2e2e2e" text-anchor="middle" stroke="#ffffff" stroke-opacity="0.85" stroke-width="2.2" paint-order="stroke" stroke-linejoin="round" textLength="43.8" lengthAdjust="spacingAndGlyphs">Denmark</text>
<text x="37.8" y="140.2" font-size="13.5" font-weight="bold" fill="#2e2e2e" text-anchor="end" stroke="#ffffff" stroke-opacity="0.85" stroke-width="2.2" paint-order="stroke" stroke-linejoin="round">Ireland</text>
<text x="183.3" y="146.7" font-size="10.5" font-weight="bold" fill="#2e2e2e" text-anchor="middle" stroke="#ffffff" stroke-opacity="0.85" stroke-width="2.2" paint-order="stroke" stroke-linejoin="round" textLength="60" lengthAdjust="spacingAndGlyphs">Netherlands</text>
<text x="166.3" y="185.2" font-size="10.5" font-weight="bold" fill="#2e2e2e" text-anchor="middle" stroke="#ffffff" stroke-opacity="0.85" stroke-width="2.2" paint-order="stroke" stroke-linejoin="round" textLength="40" lengthAdjust="spacingAndGlyphs">Belgium</text>
<text x="231.3" y="174.5" font-size="13.5" font-weight="bold" fill="#2e2e2e" text-anchor="middle" stroke="#ffffff" stroke-opacity="0.85" stroke-width="2.2" paint-order="stroke" stroke-linejoin="round" textLength="56" lengthAdjust="spacingAndGlyphs">Germany</text>
<text x="407.3" y="25.3" font-size="13.5" font-weight="bold" fill="#2e2e2e" text-anchor="middle" stroke="#ffffff" stroke-opacity="0.85" stroke-width="2.2" paint-order="stroke" stroke-linejoin="round" textLength="46" lengthAdjust="spacingAndGlyphs">Estonia</text>
<text x="408.5" y="61.5" font-size="13.5" font-weight="bold" fill="#2e2e2e" text-anchor="middle" stroke="#ffffff" stroke-opacity="0.85" stroke-width="2.2" paint-order="stroke" stroke-linejoin="round" textLength="37" lengthAdjust="spacingAndGlyphs">Latvia</text>
<text x="384.8" y="89.8" font-size="13.5" font-weight="bold" fill="#2e2e2e" text-anchor="middle" stroke="#ffffff" stroke-opacity="0.85" stroke-width="2.2" paint-order="stroke" stroke-linejoin="round" textLength="58" lengthAdjust="spacingAndGlyphs">Lithuania</text>
<text x="325.7" y="141.9" font-size="13.5" font-weight="bold" fill="#2e2e2e" text-anchor="middle" stroke="#ffffff" stroke-opacity="0.85" stroke-width="2.2" paint-order="stroke" stroke-linejoin="round" textLength="43.8" lengthAdjust="spacingAndGlyphs">Poland</text>
<text x="431.6" y="136.7" font-size="13.5" font-weight="bold" fill="#2e2e2e" text-anchor="middle" stroke="#ffffff" stroke-opacity="0.85" stroke-width="2.2" paint-order="stroke" stroke-linejoin="round" textLength="47.3" lengthAdjust="spacingAndGlyphs">Belarus</text>
<text x="470.0" y="212.4" font-size="13.5" font-weight="bold" fill="#2e2e2e" text-anchor="middle" stroke="#ffffff" stroke-opacity="0.85" stroke-width="2.2" paint-order="stroke" stroke-linejoin="round" textLength="48.5" lengthAdjust="spacingAndGlyphs">Ukraine</text>
<text x="286.7" y="202.7" font-size="10.5" font-weight="bold" fill="#2e2e2e" text-anchor="middle" stroke="#ffffff" stroke-opacity="0.85" stroke-width="2.2" paint-order="stroke" stroke-linejoin="round" textLength="39" lengthAdjust="spacingAndGlyphs">Czechia</text>
<text x="345.8" y="216.5" font-size="10.5" font-weight="bold" fill="#2e2e2e" text-anchor="middle" stroke="#ffffff" stroke-opacity="0.85" stroke-width="2.2" paint-order="stroke" stroke-linejoin="round" textLength="42" lengthAdjust="spacingAndGlyphs">Slovakia</text>
<text x="274.4" y="235.7" font-size="10.5" font-weight="bold" fill="#2e2e2e" text-anchor="middle" stroke="#ffffff" stroke-opacity="0.85" stroke-width="2.2" paint-order="stroke" stroke-linejoin="round" textLength="36" lengthAdjust="spacingAndGlyphs">Austria</text>
<text x="338.0" y="245.6" font-size="10.5" font-weight="bold" fill="#2e2e2e" text-anchor="middle" stroke="#ffffff" stroke-opacity="0.85" stroke-width="2.2" paint-order="stroke" stroke-linejoin="round" textLength="41" lengthAdjust="spacingAndGlyphs">Hungary</text>
<text x="437.3" y="235.7" font-size="10.5" font-weight="bold" fill="#2e2e2e" text-anchor="middle" stroke="#ffffff" stroke-opacity="0.85" stroke-width="2.2" paint-order="stroke" stroke-linejoin="round" textLength="42" lengthAdjust="spacingAndGlyphs">Moldova</text>
<text x="396.6" y="267.1" font-size="13.5" font-weight="bold" fill="#2e2e2e" text-anchor="middle" stroke="#ffffff" stroke-opacity="0.85" stroke-width="2.2" paint-order="stroke" stroke-linejoin="round" textLength="55.6" lengthAdjust="spacingAndGlyphs">Romania</text>
<text x="280.7" y="276.6" font-size="10.5" font-weight="bold" fill="#2e2e2e" text-anchor="middle" stroke="#ffffff" stroke-opacity="0.85" stroke-width="2.2" paint-order="stroke" stroke-linejoin="round" textLength="36" lengthAdjust="spacingAndGlyphs">Croatia</text>
<text x="349.8" y="292.5" font-size="10.5" font-weight="bold" fill="#2e2e2e" text-anchor="middle" stroke="#ffffff" stroke-opacity="0.85" stroke-width="2.2" paint-order="stroke" stroke-linejoin="round" textLength="31" lengthAdjust="spacingAndGlyphs">Serbia</text>
<text x="400.2" y="327.1" font-size="13.5" font-weight="bold" fill="#2e2e2e" text-anchor="middle" stroke="#ffffff" stroke-opacity="0.85" stroke-width="2.2" paint-order="stroke" stroke-linejoin="round" textLength="52" lengthAdjust="spacingAndGlyphs">Bulgaria</text>
<text x="254.5" y="310.7" font-size="13.5" font-weight="bold" fill="#2e2e2e" text-anchor="middle" stroke="#ffffff" stroke-opacity="0.85" stroke-width="2.2" paint-order="stroke" stroke-linejoin="round" textLength="27" lengthAdjust="spacingAndGlyphs">Italy</text>
<text x="370.2" y="365.2" font-size="13.5" font-weight="bold" fill="#2e2e2e" text-anchor="middle" stroke="#ffffff" stroke-opacity="0.85" stroke-width="2.2" paint-order="stroke" stroke-linejoin="round" textLength="45" lengthAdjust="spacingAndGlyphs">Greece</text>
<text x="141.4" y="253.4" font-size="13.5" font-weight="bold" fill="#2e2e2e" text-anchor="middle" stroke="#ffffff" stroke-opacity="0.85" stroke-width="2.2" paint-order="stroke" stroke-linejoin="round" textLength="42.6" lengthAdjust="spacingAndGlyphs">France</text>
<text x="75.7" y="364.0" font-size="13.5" font-weight="bold" fill="#2e2e2e" text-anchor="middle" stroke="#ffffff" stroke-opacity="0.85" stroke-width="2.2" paint-order="stroke" stroke-linejoin="round" textLength="35.5" lengthAdjust="spacingAndGlyphs">Spain</text>
<text x="39.7" y="344.4" font-size="13.5" font-weight="bold" fill="#2e2e2e" text-anchor="end" stroke="#ffffff" stroke-opacity="0.85" stroke-width="2.2" paint-order="stroke" stroke-linejoin="round">Portugal</text>
<text x="221.1" y="439.1" font-size="10.5" font-weight="bold" fill="#2e2e2e" text-anchor="middle" stroke="#ffffff" stroke-opacity="0.85" stroke-width="2.2" paint-order="stroke" stroke-linejoin="round" textLength="37" lengthAdjust="spacingAndGlyphs">Tunisia</text>
<text x="494.5" y="371.7" font-size="13.5" font-weight="bold" fill="#2e2e2e" text-anchor="start" stroke="#ffffff" stroke-opacity="0.85" stroke-width="2.2" paint-order="stroke" stroke-linejoin="round">Turkey</text>
<circle cx="111.2" cy="163.2" r="3" fill="#fff" stroke="#1c1c1c" stroke-width="1.25"/><circle cx="111.2" cy="163.2" r="1.5" fill="#1c1c1c"/>
<text x="111.2" y="156.5" font-size="10.5" font-weight="normal" fill="#1f1f1f" text-anchor="middle" stroke="#ffffff" stroke-opacity="0.85" stroke-width="2" paint-order="stroke" stroke-linejoin="round">London</text>
<circle cx="139.5" cy="210.0" r="3" fill="#fff" stroke="#1c1c1c" stroke-width="1.25"/><circle cx="139.5" cy="210.0" r="1.5" fill="#1c1c1c"/>
<text x="139.5" y="204.2" font-size="10.5" font-weight="normal" fill="#1f1f1f" text-anchor="middle" stroke="#ffffff" stroke-opacity="0.85" stroke-width="2" paint-order="stroke" stroke-linejoin="round">Paris</text>
<circle cx="265.4" cy="144.4" r="3" fill="#fff" stroke="#1c1c1c" stroke-width="1.25"/><circle cx="265.4" cy="144.4" r="1.5" fill="#1c1c1c"/>
<text x="246.5" y="158.5" font-size="10.5" font-weight="normal" fill="#1f1f1f" text-anchor="middle" stroke="#ffffff" stroke-opacity="0.85" stroke-width="2" paint-order="stroke" stroke-linejoin="round">Berlin</text>
<circle cx="277.2" cy="188.5" r="3" fill="#fff" stroke="#1c1c1c" stroke-width="1.25"/><circle cx="277.2" cy="188.5" r="1.5" fill="#1c1c1c"/>
<text x="299.2" y="182.9" font-size="10.5" font-weight="normal" fill="#1f1f1f" text-anchor="middle" stroke="#ffffff" stroke-opacity="0.85" stroke-width="2" paint-order="stroke" stroke-linejoin="round">Prague</text>
<circle cx="299.2" cy="221.1" r="3" fill="#fff" stroke="#1c1c1c" stroke-width="1.25"/><circle cx="299.2" cy="221.1" r="1.5" fill="#1c1c1c"/>
<text x="277.9" y="214.6" font-size="10.5" font-weight="normal" fill="#1f1f1f" text-anchor="middle" stroke="#ffffff" stroke-opacity="0.85" stroke-width="2" paint-order="stroke" stroke-linejoin="round">Vienna</text>
<circle cx="255.2" cy="322.7" r="3" fill="#fff" stroke="#1c1c1c" stroke-width="1.25"/><circle cx="255.2" cy="322.7" r="1.5" fill="#1c1c1c"/>
<text x="274.4" y="326.8" font-size="10.5" font-weight="normal" fill="#1f1f1f" text-anchor="middle" stroke="#ffffff" stroke-opacity="0.85" stroke-width="2" paint-order="stroke" stroke-linejoin="round">Rome</text>
<circle cx="442.8" cy="336.6" r="2.4" fill="#fff" stroke="#333" stroke-width="1"/>
<text x="442.0" y="349.9" font-size="10.5" font-weight="normal" fill="#1f1f1f" text-anchor="middle" stroke="#ffffff" stroke-opacity="0.85" stroke-width="2" paint-order="stroke" stroke-linejoin="round">Istanbul</text>
<circle cx="137.9" cy="330.7" r="2.4" fill="#fff" stroke="#333" stroke-width="1"/>
<text x="137.7" y="324.9" font-size="10.5" font-weight="normal" fill="#1f1f1f" text-anchor="middle" stroke="#ffffff" stroke-opacity="0.85" stroke-width="2" paint-order="stroke" stroke-linejoin="round">Barcelona</text>
<circle cx="70.2" cy="345.6" r="3" fill="#fff" stroke="#1c1c1c" stroke-width="1.25"/><circle cx="70.2" cy="345.6" r="1.5" fill="#1c1c1c"/>
<text x="71.4" y="339.3" font-size="10.5" font-weight="normal" fill="#1f1f1f" text-anchor="middle" stroke="#ffffff" stroke-opacity="0.85" stroke-width="2" paint-order="stroke" stroke-linejoin="round">Madrid</text>
</g>
<g>
<defs><linearGradient id="mk" x1="0" y1="0" x2="0" y2="1"><stop offset="0" stop-color="#fb6d61"/><stop offset="1" stop-color="#ea3f31"/></linearGradient></defs>
<g transform="translate(1.1 1.2)"><path d="M233 199.5 C232.2 188 222.2 182 222.2 171 A10.8 10.8 0 0 1 243.8 171 C243.8 182 233.8 188 233 199.5 Z" fill="url(#mk)" stroke="#c4372b" stroke-width="0.8"/>
<circle cx="233" cy="171.1" r="3.5" fill="#5c1410"/></g></g>
<g font-family="'Liberation Sans',sans-serif">
<rect x="10" y="10" width="105" height="35.6" rx="2" fill="#fff" filter="url(#sh)"/>
<rect x="53" y="10" width="1" height="35.6" fill="#e6e6e6"/>
<text x="32" y="32.2" font-size="11" font-weight="bold" fill="#111" text-anchor="middle">Map</text>
<text x="84.4" y="32.2" font-size="11" fill="#565656" text-anchor="middle">Satellite</text>
<rect x="462.2" y="332.6" width="27.8" height="28.4" rx="2" fill="#fff" filter="url(#sh)"/>
<g fill="#f8b319"><circle cx="476.3" cy="339.4" r="2.9"/><path d="M473.2 342.6 Q476.3 341.8 479.4 342.6 Q480.6 343 481 344.4 L482.2 350.2 L480.9 350.6 L479.6 346.6 L479.2 355.8 L476.7 355.8 L476.3 351 L475.9 355.8 L473.4 355.8 L473 346.6 L471.7 350.6 L470.4 350.2 L471.6 344.4 Q472 343 473.2 342.6 Z"/></g>
<path d="M474.6 342.6 L476.3 345.4 L478 342.6 Z" fill="#e2791c"/>
<rect x="462.2" y="370.9" width="27.8" height="55.1" rx="2" fill="#fff" filter="url(#sh)"/>
<rect x="466" y="398.2" width="20" height="0.8" fill="#e6e6e6"/>
<path d="M471 384.4 H481.6 M476.3 379.1 V389.7" stroke="#666" stroke-width="2.6"/>
<path d="M471 412.4 H481.6" stroke="#666" stroke-width="2.6"/>
<rect x="258.3" y="436.7" width="241.7" height="13.3" fill="#fff" opacity="0.72"/>
<rect x="430.4" y="437" width="0.8" height="13" fill="#ccc" opacity="0.8"/>
<text x="263" y="447.3" font-size="10" fill="#444" textLength="161" lengthAdjust="spacingAndGlyphs">Map data ©2017 Google, ORION-ME</text>
<text x="435" y="447.3" font-size="10" fill="#444" textLength="59" lengthAdjust="spacingAndGlyphs">Terms of Use</text>
<text x="6.6" y="442.4" font-size="19.9" letter-spacing="-0.55" fill="#fff" stroke="#fff" stroke-width="3" stroke-opacity="0.75" stroke-linejoin="round">Google</text>
<text x="6.6" y="442.4" font-size="19.9" letter-spacing="-0.55" stroke-width="0.35"><tspan fill="#4285f4" stroke="#4285f4">G</tspan><tspan fill="#ea4335" stroke="#ea4335">o</tspan><tspan fill="#fbbc05" stroke="#fbbc05">o</tspan><tspan fill="#4285f4" stroke="#4285f4">g</tspan><tspan fill="#34a853" stroke="#34a853">l</tspan><tspan fill="#ea4335" stroke="#ea4335">e</tspan></text>
</g>
</svg>
<!--/MAP-->

<!--BOTTOMTABS-->
<div class="a vd" style="left:6px;top:654px;width:88px;height:17px;background:#cceeff;"></div>
<div class="a vd" style="left:96px;top:654px;width:88px;height:17px;background:#cceeff;"></div>
<div class="a vd" style="left:186px;top:654px;width:88px;height:17px;background:#cceeff;"></div>
<div class="a vd" style="left:9px;top:656px;font-family:'DejaVu Sans Condensed','DejaVu Sans',sans-serif;font-weight:bold;font-size:9.7px;line-height:13px;">Solar radiation</div>
<div class="a vd" style="left:99px;top:656px;font-family:'DejaVu Sans Condensed','DejaVu Sans',sans-serif;font-weight:bold;font-size:9.7px;line-height:13px;">Temperature</div>
<div class="a vd" style="left:189px;top:656px;font-family:'DejaVu Sans Condensed','DejaVu Sans',sans-serif;font-weight:bold;font-size:9.7px;line-height:13px;">Other maps</div>

<!--PANEL-->

<!-- tabs -->
<div class="a" style="left:510px;top:122px;width:425px;height:25px;background:#fff;"></div>
<div class="a" style="left:511px;top:123px;width:121px;height:23px;background:#0000ff;"></div>
<div class="a" style="left:633px;top:123px;width:121px;height:23px;background:#999;"></div>
<div class="a" style="left:755px;top:123px;width:120px;height:23px;background:#999;"></div>
<div class="a" style="left:876px;top:123px;width:60px;height:23px;background:#999;"></div>
<!-- panel -->
<div class="a" style="left:509px;top:147px;width:430px;height:552px;box-sizing:border-box;background:#d2d2d2;border:1px solid #737373;border-top:2px solid #5c5c5c;"></div>
<div class="sel" style="left:652px;top:185px;width:137px;"></div>
<div class="sel" style="left:626.5px;top:210px;width:124px;"></div>
<div class="inp" style="left:684px;top:238.5px;width:50px;height:22px;"></div>
<div class="inp" style="left:742px;top:265.5px;width:50.5px;height:22px;"></div>
<div class="sel" style="left:647.5px;top:314px;width:132px;"></div>
<div class="inp" style="left:611px;top:341.5px;width:39px;height:22px;"></div>
<div class="cb" style="left:718px;top:346.5px;"></div>
<div class="inp" style="left:658px;top:368.5px;width:45px;height:22px;"></div>
<div class="cb" style="left:718px;top:373.5px;"></div>
<div class="cb" style="left:527px;top:443px;"></div>
<div class="inp" style="left:737.5px;top:439px;width:39px;height:21.5px;background:#eeeeee;border-color:#dcdcdc;"></div>
<div class="cb dis" style="left:792px;top:443.5px;"></div>
<div class="cb" style="left:527px;top:470px;"></div>
<div class="inp" style="left:737.5px;top:466px;width:39px;height:21.5px;background:#eeeeee;border-color:#dcdcdc;"></div>
<div class="cb dis" style="left:792px;top:470.5px;"></div>
<div class="cb" style="left:527px;top:495.5px;"></div>
<svg class="a" style="left:527px;top:495.5px" width="13" height="13" viewBox="0 0 13 13"><path d="M3 6.4 L5.3 9.2 L9.8 3.2" fill="none" stroke="#111" stroke-width="1.7"/></svg>
<div class="btn" style="left:593.5px;top:520px;width:72px;height:20px;"></div>
<div class="cb" style="left:527px;top:572.5px;"></div>
<div class="cb dis" style="left:694px;top:572.5px;"></div>
<div class="rd" style="left:527.5px;top:594.7px;"></div><div class="a" style="left:531.5px;top:598.7px;width:5px;height:5px;border-radius:50%;background:#222;"></div>
<div class="rd" style="left:694.5px;top:594.7px;"></div>
<div class="rd" style="left:867px;top:594.7px;"></div>
<div class="a" style="left:553.7px;top:632.3px;width:100px;height:39.4px;box-sizing:border-box;background:#add8e6;border:2px solid;border-color:#f4f4f4 #747474 #747474 #f4f4f4;"></div>
<div class="a" style="left:526.8px;top:127.7px;font-family:'DejaVu Sans',sans-serif;font-size:11.58px;line-height:15px;font-weight:bold;color:#fff;letter-spacing:-0.15px;">PV Estimation</div>
<div class="a" style="left:638.6px;top:127.2px;font-family:'DejaVu Sans',sans-serif;font-size:12.43px;line-height:16px;color:#f4f4f4;">Monthly radiation</div>
<div class="a" style="left:770.0px;top:127.2px;font-family:'DejaVu Sans',sans-serif;font-size:12.27px;line-height:16px;color:#f4f4f4;">Daily radiation</div>
<div class="a" style="left:888.0px;top:127.2px;font-family:'DejaVu Sans',sans-serif;font-size:12.40px;line-height:16px;color:#f4f4f4;">Stand-alone PV</div>
<div class="a" style="left:517.0px;top:156.8px;font-family:'DejaVu Sans',sans-serif;font-size:16.54px;line-height:22px;font-weight:bold;">Performance of Grid-connected PV</div>
<div class="a" style="left:519.6px;top:186.9px;font-family:'DejaVu Sans',sans-serif;font-size:13.09px;line-height:17px;">Radiation database:</div>
<div class="a" style="left:657.2px;top:186.7px;font-family:'DejaVu Sans Condensed','DejaVu Sans',sans-serif;font-size:12.90px;line-height:17px;">Climate-SAF PVGIS</div>
<div class="a" style="left:794.5px;top:186.9px;font-family:'DejaVu Sans',sans-serif;font-size:13.45px;line-height:17px;color:#0000ff;">[What is this?]</div>
<div class="a" style="left:519.6px;top:212.4px;font-family:'DejaVu Sans',sans-serif;font-size:13.45px;line-height:17px;letter-spacing:0.04px;">PV technology:</div>
<div class="a" style="left:631.4px;top:212.6px;font-family:'DejaVu Sans Condensed','DejaVu Sans',sans-serif;font-size:12.54px;line-height:16px;letter-spacing:-0.09px;">Crystalline silicon</div>
<div class="a" style="left:519.6px;top:242.4px;font-family:'DejaVu Sans',sans-serif;font-size:13.22px;line-height:17px;">Installed peak PV power</div>
<div class="a" style="left:687.5px;top:241.8px;font-family:'DejaVu Sans Condensed','DejaVu Sans',sans-serif;font-size:13.00px;line-height:17px;">10</div>
<div class="a" style="left:740.3px;top:242.9px;font-family:'DejaVu Sans',sans-serif;font-size:12.54px;line-height:16px;letter-spacing:-0.27px;">kWp</div>
<div class="a" style="left:519.6px;top:269.1px;font-family:'DejaVu Sans',sans-serif;font-size:13.26px;line-height:17px;">Estimated system losses [0;100]</div>
<div class="a" style="left:745.3px;top:268.8px;font-family:'DejaVu Sans Condensed','DejaVu Sans',sans-serif;font-size:13.00px;line-height:17px;">10</div>
<div class="a" style="left:798.4px;top:269.6px;font-family:'DejaVu Sans',sans-serif;font-size:12.63px;line-height:16px;">%</div>
<div class="a" style="left:519.6px;top:292.9px;font-family:'DejaVu Sans',sans-serif;font-size:12.78px;line-height:17px;font-weight:bold;">Fixed mounting options:</div>
<div class="a" style="left:519.6px;top:316.1px;font-family:'DejaVu Sans',sans-serif;font-size:13.05px;line-height:17px;">Mounting position:</div>
<div class="a" style="left:652.3px;top:315.9px;font-family:'DejaVu Sans Condensed','DejaVu Sans',sans-serif;font-size:12.76px;line-height:17px;">Free-standing</div>
<div class="a" style="left:523.5px;top:345.1px;font-family:'DejaVu Sans',sans-serif;font-size:13.37px;line-height:17px;">Slope [0;90]</div>
<div class="a" style="left:614.1px;top:344.7px;font-family:'DejaVu Sans Condensed','DejaVu Sans',sans-serif;font-size:13.00px;line-height:17px;">60</div>
<div class="a" style="left:653.0px;top:346.0px;font-family:'DejaVu Sans',sans-serif;font-size:13.00px;line-height:17px;font-weight:bold;">°</div>
<div class="a" style="left:739.0px;top:346.6px;font-family:'DejaVu Sans',sans-serif;font-size:12.64px;line-height:16px;">Optimize slope</div>
<div class="a" style="left:523.5px;top:372.2px;font-family:'DejaVu Sans',sans-serif;font-size:13.23px;line-height:17px;">Azimuth [-180;180]</div>
<div class="a" style="left:661.5px;top:371.8px;font-family:'DejaVu Sans Condensed','DejaVu Sans',sans-serif;font-size:13.00px;line-height:17px;">0</div>
<div class="a" style="left:706.0px;top:373.0px;font-family:'DejaVu Sans',sans-serif;font-size:13.00px;line-height:17px;font-weight:bold;">°</div>
<div class="a" style="left:739.0px;top:373.0px;font-family:'DejaVu Sans',sans-serif;font-size:12.76px;line-height:17px;">Also optimize azimuth</div>
<div class="a" style="left:519.6px;top:398.0px;font-family:'DejaVu Sans',sans-serif;font-size:10.12px;line-height:13px;color:#b22222;">(Azimuth angle from -180 to 180. East=-90, South=0)</div>
<div class="a" style="left:519.6px;top:415.0px;font-family:'DejaVu Sans',sans-serif;font-size:12.73px;line-height:17px;font-weight:bold;">Tracking options:</div>
<div class="a" style="left:548.3px;top:442.7px;font-family:'DejaVu Sans',sans-serif;font-size:12.89px;line-height:17px;">Vertical axis</div>
<div class="a" style="left:650.0px;top:442.0px;font-family:'DejaVu Sans',sans-serif;font-size:13.45px;line-height:17px;letter-spacing:0.02px;">Slope [0;90]</div>
<div class="a" style="left:740.5px;top:441.8px;font-family:'DejaVu Sans Condensed','DejaVu Sans',sans-serif;font-size:13.00px;line-height:17px;color:#9a9a9a;">0</div>
<div class="a" style="left:777.8px;top:443.0px;font-family:'DejaVu Sans',sans-serif;font-size:13.00px;line-height:17px;font-weight:bold;">°</div>
<div class="a" style="left:813.0px;top:443.5px;font-family:'DejaVu Sans',sans-serif;font-size:12.54px;line-height:16px;letter-spacing:-0.11px;">Optimize</div>
<div class="a" style="left:548.3px;top:469.8px;font-family:'DejaVu Sans',sans-serif;font-size:12.90px;line-height:17px;">Inclined axis</div>
<div class="a" style="left:650.0px;top:469.0px;font-family:'DejaVu Sans',sans-serif;font-size:13.45px;line-height:17px;letter-spacing:0.02px;">Slope [0;90]</div>
<div class="a" style="left:740.5px;top:468.8px;font-family:'DejaVu Sans Condensed','DejaVu Sans',sans-serif;font-size:13.00px;line-height:17px;color:#9a9a9a;">0</div>
<div class="a" style="left:777.8px;top:470.0px;font-family:'DejaVu Sans',sans-serif;font-size:13.00px;line-height:17px;font-weight:bold;">°</div>
<div class="a" style="left:813.0px;top:470.5px;font-family:'DejaVu Sans',sans-serif;font-size:12.54px;line-height:16px;letter-spacing:-0.11px;">Optimize</div>
<div class="a" style="left:548.3px;top:494.9px;font-family:'DejaVu Sans',sans-serif;font-size:13.16px;line-height:17px;">2-axis tracking</div>
<div class="a" style="left:519.6px;top:522.4px;font-family:'DejaVu Sans',sans-serif;font-size:12.66px;line-height:16px;">Horizon file</div>
<div class="a" style="left:603.4px;top:521.7px;font-family:'DejaVu Sans Condensed','DejaVu Sans',sans-serif;font-size:12.71px;line-height:17px;">Browse...</div>
<div class="a" style="left:672.0px;top:522.4px;font-family:'DejaVu Sans Condensed','DejaVu Sans',sans-serif;font-size:12.54px;line-height:16px;letter-spacing:-0.03px;">No file selected.</div>
<div class="a" style="left:523.5px;top:549.5px;font-family:'DejaVu Sans',sans-serif;font-size:12.56px;line-height:16px;font-weight:bold;">Output options</div>
<div class="a" style="left:548.3px;top:571.8px;font-family:'DejaVu Sans',sans-serif;font-size:13.06px;line-height:17px;">Show graphs</div>
<div class="a" style="left:715.2px;top:571.8px;font-family:'DejaVu Sans',sans-serif;font-size:13.00px;line-height:17px;">Show horizon</div>
<div class="a" style="left:549.6px;top:595.0px;font-family:'DejaVu Sans',sans-serif;font-size:12.79px;line-height:17px;">Web page</div>
<div class="a" style="left:716.8px;top:595.0px;font-family:'DejaVu Sans',sans-serif;font-size:13.36px;line-height:17px;">Text file</div>
<div class="a" style="left:888.0px;top:595.5px;font-family:'DejaVu Sans',sans-serif;font-size:12.58px;line-height:16px;">PDF</div>
<div class="a" style="left:573.4px;top:643.3px;font-family:'DejaVu Sans Condensed','DejaVu Sans',sans-serif;font-size:13.90px;line-height:18px;font-weight:bold;letter-spacing:-0.51px;">Calculate</div>
<div class="a" style="left:756.0px;top:636.1px;font-family:'DejaVu Sans',sans-serif;font-size:12.75px;line-height:17px;color:#0000ff;">[help]</div>
<!--/PANEL-->

<!--POPUP-->

<style>
.tc{position:absolute;box-sizing:border-box;border:1px solid;border-color:#3c3c3c #d2d2d2 #d2d2d2 #3c3c3c;font-family:"Liberation Serif",serif;font-size:13.33px;line-height:17px;padding:0.5px 1px 0 1.5px;white-space:nowrap;overflow:hidden;color:#000;}
.tc sub{font-size:9.5px;vertical-align:-2px;line-height:0;}
</style>
<!-- popup window frame -->
<div class="a" style="left:935px;top:91px;width:566px;height:770px;box-sizing:border-box;background:#fbfbfb;border:1px solid #c2c2c2;box-shadow:0 0 0 0.5px rgba(0,0,0,0.04);"></div>
<!-- firefox icon -->
<svg class="a" style="left:945px;top:101px" width="16" height="16" viewBox="0 0 16 16">
  <defs><radialGradient id="fx" cx="50%" cy="30%" r="80%"><stop offset="0" stop-color="#ffcb2f"/><stop offset="0.45" stop-color="#f5851f"/><stop offset="1" stop-color="#d23c1a"/></radialGradient></defs>
  <circle cx="8" cy="8.3" r="7.3" fill="url(#fx)"/>
  <circle cx="8.8" cy="6.6" r="4.6" fill="#2f74c9"/>
  <path d="M11.8 3.4 A4.6 4.6 0 0 1 13 8.6 L10.6 7.4 Z" fill="#5aa0e6"/>
  <path d="M2.4 6.6 C3.6 5.2 5.6 5.4 6.8 6.6 C7.8 7.5 9.4 7.6 10.8 8.1 C10.6 10.9 7 12.2 4.6 10.6 C3.2 9.7 2.4 8.2 2.4 6.6 Z" fill="#f58220"/>
  <path d="M1 5.6 C1.4 3.6 2.8 2.4 3.8 2 C3.4 3.1 3.7 4.1 4.4 4.7 C3.3 5 2.4 6.2 2.4 7.6 Z" fill="#e2561b"/>
  <path d="M10.8 8.1 C12.2 8.6 12.6 10.2 11.6 11.6 C13.4 10.6 14.6 8.6 14.4 6.4 C13.8 7.4 12.4 8 10.8 8.1Z" fill="#f9a11f"/>
</svg>
<!-- window buttons -->
<div class="a" style="left:1382px;top:108px;width:14px;height:2.2px;background:#1a1a1a;"></div>
<div class="a" style="left:1413px;top:98px;width:14.5px;height:12px;box-sizing:border-box;border:1.2px solid #1a1a1a;"></div><div class="a" style="left:1413px;top:98px;width:14.5px;height:2.6px;background:#1a1a1a;"></div>
<div class="a" style="left:1438px;top:92px;width:56px;height:25px;background:#c75050;"></div>
<svg class="a" style="left:1459px;top:98px" width="14" height="12" viewBox="0 0 14 12"><path d="M2.2 1.2 L11.8 10.4 M11.8 1.2 L2.2 10.4" stroke="#fff" stroke-width="2.2"/></svg>
<!-- inner frame: location bar + content -->
<div class="a" style="left:943px;top:126.5px;width:550px;height:726.5px;box-sizing:border-box;border:1px solid #a7adb5;background:#f5f5ff;"></div>
<div class="a" style="left:944px;top:127.5px;width:548px;height:25px;background:#fafafa;"></div>
<div class="a" style="left:947px;top:128px;width:542.5px;height:23.5px;box-sizing:border-box;background:linear-gradient(#f3f3f3,#eeeeee);border:1px solid #c3c9d1;border-top-color:#b4bac2;"></div>
<div class="a" style="left:944px;top:151.5px;width:548px;height:1.5px;background:#adb3ba;"></div>
<svg class="a" style="left:953px;top:132px" width="16" height="16" viewBox="0 0 16 16"><circle cx="8" cy="8" r="6.4" fill="none" stroke="#6a6a6e" stroke-width="1.1"/><rect x="7.3" y="7" width="1.5" height="4.4" fill="#6a6a6e"/><rect x="7.3" y="4.4" width="1.5" height="1.6" fill="#6a6a6e"/></svg>
<div class="a" style="left:974px;top:131px;width:1px;height:17px;background:#e0e1e4;"></div>
<div class="a ui" style="left:980px;top:133px;font-size:12px;line-height:16px;color:#77777b;">re.jrc.ec.<span style="color:#0c0c0d">europa.eu</span>/pvgis/apps4/PVcalc.php</div>
<!-- scrollbar -->
<div class="a" style="left:1476px;top:153px;width:16px;height:699px;background:#f0f0f0;"></div>
<div class="a" style="left:1476.3px;top:170px;width:14.7px;height:345px;background:#cdcdcd;"></div>
<svg class="a" style="left:1479px;top:157px" width="10" height="8" viewBox="0 0 10 8"><path d="M1.2 6 L5 2.2 L8.8 6" fill="none" stroke="#505050" stroke-width="1.9"/></svg>
<svg class="a" style="left:1479px;top:838px" width="10" height="8" viewBox="0 0 10 8"><path d="M1.2 2 L5 5.8 L8.8 2" fill="none" stroke="#505050" stroke-width="1.9"/></svg>
<div class="a" style="left:968.3px;top:97.0px;font-family:'Liberation Sans',sans-serif;font-size:19.17px;line-height:25px;color:#111;">PV power estimate information - Mozilla Firefox</div>
<div class="a" style="left:954.8px;top:163.7px;font-family:'Liberation Serif',serif;font-size:16.65px;line-height:22px;font-weight:bold;">Performance of Grid-connected PV</div>
<div class="a" style="left:954.8px;top:230.7px;font-family:'Liberation Serif',serif;font-size:14.02px;line-height:18px;font-weight:bold;">PVGIS estimates of solar electricity generation</div>
<div class="a" style="left:954.8px;top:262.0px;font-family:'Liberation Serif',serif;font-size:13.33px;line-height:17px;">Location: 49°24'5" North, 10°38'5" East, Elevation: 421 m a.s.l.,</div>
<div class="a" style="left:954.8px;top:314.0px;font-family:'Liberation Serif',serif;font-size:13.32px;line-height:17px;">Solar radiation database used: PVGIS-CMSAF</div>
<div class="a" style="left:954.8px;top:346.3px;font-family:'Liberation Serif',serif;font-size:13.36px;line-height:17px;">Nominal power of the PV system: 10.0 kW (crystalline silicon)</div>
<div class="a" style="left:954.8px;top:362.1px;font-family:'Liberation Serif',serif;font-size:13.33px;line-height:17px;">Estimated losses due to temperature and low irradiance: 7.3% (using local ambient</div>
<div class="a" style="left:954.8px;top:378.1px;font-family:'Liberation Serif',serif;font-size:13.35px;line-height:17px;">temperature)</div>
<div class="a" style="left:954.8px;top:394.1px;font-family:'Liberation Serif',serif;font-size:13.32px;line-height:17px;">Estimated loss due to angular reflectance effects: 3.0%</div>
<div class="a" style="left:954.8px;top:410.2px;font-family:'Liberation Serif',serif;font-size:13.33px;line-height:17px;">Other losses (cables, inverter etc.): 10.0%</div>
<div class="a" style="left:954.8px;top:426.1px;font-family:'Liberation Serif',serif;font-size:13.35px;line-height:17px;">Combined PV system losses: 19.1%</div>
<div class="a tm" style="left:954.8px;top:200.3px;font-size:13.33px;line-height:17px;color:#00e000;">NOTE: before using these calculations for anything serious, you should read <span style="color:#0000ee;text-decoration:underline;">[this]</span></div>
<div class="a" style="left:955.5px;top:467.5px;width:299px;height:360.5px;background:#e8e8e8;box-shadow:0 0 0 0.5px #eeeef2;"></div>
<div class="tc" style="left:957px;top:469px;width:295.5px;height:19.5px;text-align:left;font-weight:bold;">Fixed system: inclination=60°, orientation=0°</div>
<div class="tc" style="left:957px;top:491px;width:111.5px;height:19.5px;text-align:left;font-weight:bold;">Month</div>
<div class="tc" style="left:1071px;top:491px;width:43.5px;height:19.5px;text-align:center;font-weight:bold;"><i>E<sub>d</sub></i></div>
<div class="tc" style="left:1117px;top:491px;width:43.5px;height:19.5px;text-align:center;font-weight:bold;"><i>E<sub>m</sub></i></div>
<div class="tc" style="left:1163px;top:491px;width:43.5px;height:19.5px;text-align:center;font-weight:bold;"><i>H<sub>d</sub></i></div>
<div class="tc" style="left:1209px;top:491px;width:43.5px;height:19.5px;text-align:center;font-weight:bold;"><i>H<sub>m</sub></i></div>
<div class="tc" style="left:957px;top:514px;width:111.5px;height:19.5px;text-align:left;">Jan</div>
<div class="tc" style="left:1071px;top:514px;width:43.5px;height:19.5px;text-align:right;">10.90</div>
<div class="tc" style="left:1117px;top:514px;width:43.5px;height:19.5px;text-align:right;">336</div>
<div class="tc" style="left:1163px;top:514px;width:43.5px;height:19.5px;text-align:right;">1.23</div>
<div class="tc" style="left:1209px;top:514px;width:43.5px;height:19.5px;text-align:right;">38.2</div>
<div class="tc" style="left:957px;top:536px;width:111.5px;height:19.5px;text-align:left;">Feb</div>
<div class="tc" style="left:1071px;top:536px;width:43.5px;height:19.5px;text-align:right;">19.50</div>
<div class="tc" style="left:1117px;top:536px;width:43.5px;height:19.5px;text-align:right;">546</div>
<div class="tc" style="left:1163px;top:536px;width:43.5px;height:19.5px;text-align:right;">2.24</div>
<div class="tc" style="left:1209px;top:536px;width:43.5px;height:19.5px;text-align:right;">62.7</div>
<div class="tc" style="left:957px;top:558px;width:111.5px;height:19.5px;text-align:left;">Mar</div>
<div class="tc" style="left:1071px;top:558px;width:43.5px;height:19.5px;text-align:right;">30.70</div>
<div class="tc" style="left:1117px;top:558px;width:43.5px;height:19.5px;text-align:right;">953</div>
<div class="tc" style="left:1163px;top:558px;width:43.5px;height:19.5px;text-align:right;">3.67</div>
<div class="tc" style="left:1209px;top:558px;width:43.5px;height:19.5px;text-align:right;">114</div>
<div class="tc" style="left:957px;top:580px;width:111.5px;height:19.5px;text-align:left;">Apr</div>
<div class="tc" style="left:1071px;top:580px;width:43.5px;height:19.5px;text-align:right;">37.40</div>
<div class="tc" style="left:1117px;top:580px;width:43.5px;height:19.5px;text-align:right;">1120</div>
<div class="tc" style="left:1163px;top:580px;width:43.5px;height:19.5px;text-align:right;">4.62</div>
<div class="tc" style="left:1209px;top:580px;width:43.5px;height:19.5px;text-align:right;">139</div>
<div class="tc" style="left:957px;top:602px;width:111.5px;height:19.5px;text-align:left;">May</div>
<div class="tc" style="left:1071px;top:602px;width:43.5px;height:19.5px;text-align:right;">35.00</div>
<div class="tc" style="left:1117px;top:602px;width:43.5px;height:19.5px;text-align:right;">1090</div>
<div class="tc" style="left:1163px;top:602px;width:43.5px;height:19.5px;text-align:right;">4.41</div>
<div class="tc" style="left:1209px;top:602px;width:43.5px;height:19.5px;text-align:right;">137</div>
<div class="tc" style="left:957px;top:624px;width:111.5px;height:19.5px;text-align:left;">Jun</div>
<div class="tc" style="left:1071px;top:624px;width:43.5px;height:19.5px;text-align:right;">35.30</div>
<div class="tc" style="left:1117px;top:624px;width:43.5px;height:19.5px;text-align:right;">1060</div>
<div class="tc" style="left:1163px;top:624px;width:43.5px;height:19.5px;text-align:right;">4.55</div>
<div class="tc" style="left:1209px;top:624px;width:43.5px;height:19.5px;text-align:right;">136</div>
<div class="tc" style="left:957px;top:646px;width:111.5px;height:19.5px;text-align:left;">Jul</div>
<div class="tc" style="left:1071px;top:646px;width:43.5px;height:19.5px;text-align:right;">34.70</div>
<div class="tc" style="left:1117px;top:646px;width:43.5px;height:19.5px;text-align:right;">1080</div>
<div class="tc" style="left:1163px;top:646px;width:43.5px;height:19.5px;text-align:right;">4.52</div>
<div class="tc" style="left:1209px;top:646px;width:43.5px;height:19.5px;text-align:right;">140</div>
<div class="tc" style="left:957px;top:668px;width:111.5px;height:19.5px;text-align:left;">Aug</div>
<div class="tc" style="left:1071px;top:668px;width:43.5px;height:19.5px;text-align:right;">34.10</div>
<div class="tc" style="left:1117px;top:668px;width:43.5px;height:19.5px;text-align:right;">1060</div>
<div class="tc" style="left:1163px;top:668px;width:43.5px;height:19.5px;text-align:right;">4.39</div>
<div class="tc" style="left:1209px;top:668px;width:43.5px;height:19.5px;text-align:right;">136</div>
<div class="tc" style="left:957px;top:690px;width:111.5px;height:19.5px;text-align:left;">Sep</div>
<div class="tc" style="left:1071px;top:690px;width:43.5px;height:19.5px;text-align:right;">31.50</div>
<div class="tc" style="left:1117px;top:690px;width:43.5px;height:19.5px;text-align:right;">946</div>
<div class="tc" style="left:1163px;top:690px;width:43.5px;height:19.5px;text-align:right;">3.95</div>
<div class="tc" style="left:1209px;top:690px;width:43.5px;height:19.5px;text-align:right;">118</div>
<div class="tc" style="left:957px;top:712px;width:111.5px;height:19.5px;text-align:left;">Oct</div>
<div class="tc" style="left:1071px;top:712px;width:43.5px;height:19.5px;text-align:right;">23.60</div>
<div class="tc" style="left:1117px;top:712px;width:43.5px;height:19.5px;text-align:right;">730</div>
<div class="tc" style="left:1163px;top:712px;width:43.5px;height:19.5px;text-align:right;">2.85</div>
<div class="tc" style="left:1209px;top:712px;width:43.5px;height:19.5px;text-align:right;">88.4</div>
<div class="tc" style="left:957px;top:734px;width:111.5px;height:19.5px;text-align:left;">Nov</div>
<div class="tc" style="left:1071px;top:734px;width:43.5px;height:19.5px;text-align:right;">13.20</div>
<div class="tc" style="left:1117px;top:734px;width:43.5px;height:19.5px;text-align:right;">395</div>
<div class="tc" style="left:1163px;top:734px;width:43.5px;height:19.5px;text-align:right;">1.54</div>
<div class="tc" style="left:1209px;top:734px;width:43.5px;height:19.5px;text-align:right;">46.3</div>
<div class="tc" style="left:957px;top:756px;width:111.5px;height:19.5px;text-align:left;">Dec</div>
<div class="tc" style="left:1071px;top:756px;width:43.5px;height:19.5px;text-align:right;">9.11</div>
<div class="tc" style="left:1117px;top:756px;width:43.5px;height:19.5px;text-align:right;">282</div>
<div class="tc" style="left:1163px;top:756px;width:43.5px;height:19.5px;text-align:right;">1.04</div>
<div class="tc" style="left:1209px;top:756px;width:43.5px;height:19.5px;text-align:right;">32.2</div>
<div class="tc" style="left:957px;top:778px;width:295.5px;height:3.5px;text-align:left;"></div>
<div class="tc" style="left:957px;top:784px;width:111.5px;height:19.5px;text-align:left;font-weight:bold;">Yearly average</div>
<div class="tc" style="left:1071px;top:784px;width:43.5px;height:19.5px;text-align:right;font-weight:bold;">26.3</div>
<div class="tc" style="left:1117px;top:784px;width:43.5px;height:19.5px;text-align:right;font-weight:bold;">799</div>
<div class="tc" style="left:1163px;top:784px;width:43.5px;height:19.5px;text-align:right;font-weight:bold;">3.26</div>
<div class="tc" style="left:1209px;top:784px;width:43.5px;height:19.5px;text-align:right;font-weight:bold;">99.0</div>
<div class="tc" style="left:957px;top:806.5px;width:111.5px;height:19.5px;text-align:left;font-weight:bold;">Total for year</div>
<div class="tc" style="left:1071px;top:806.5px;width:89.5px;height:19.5px;text-align:right;font-weight:bold;">9590</div>
<div class="tc" style="left:1163px;top:806.5px;width:89.5px;height:19.5px;text-align:right;font-weight:bold;">1190</div>
<!--/POPUP-->

<!-- left window edge -->
<div class="a" style="left:0;top:0;width:2px;height:951px;background:#0c3c8c;"></div>

</body>
</html>
